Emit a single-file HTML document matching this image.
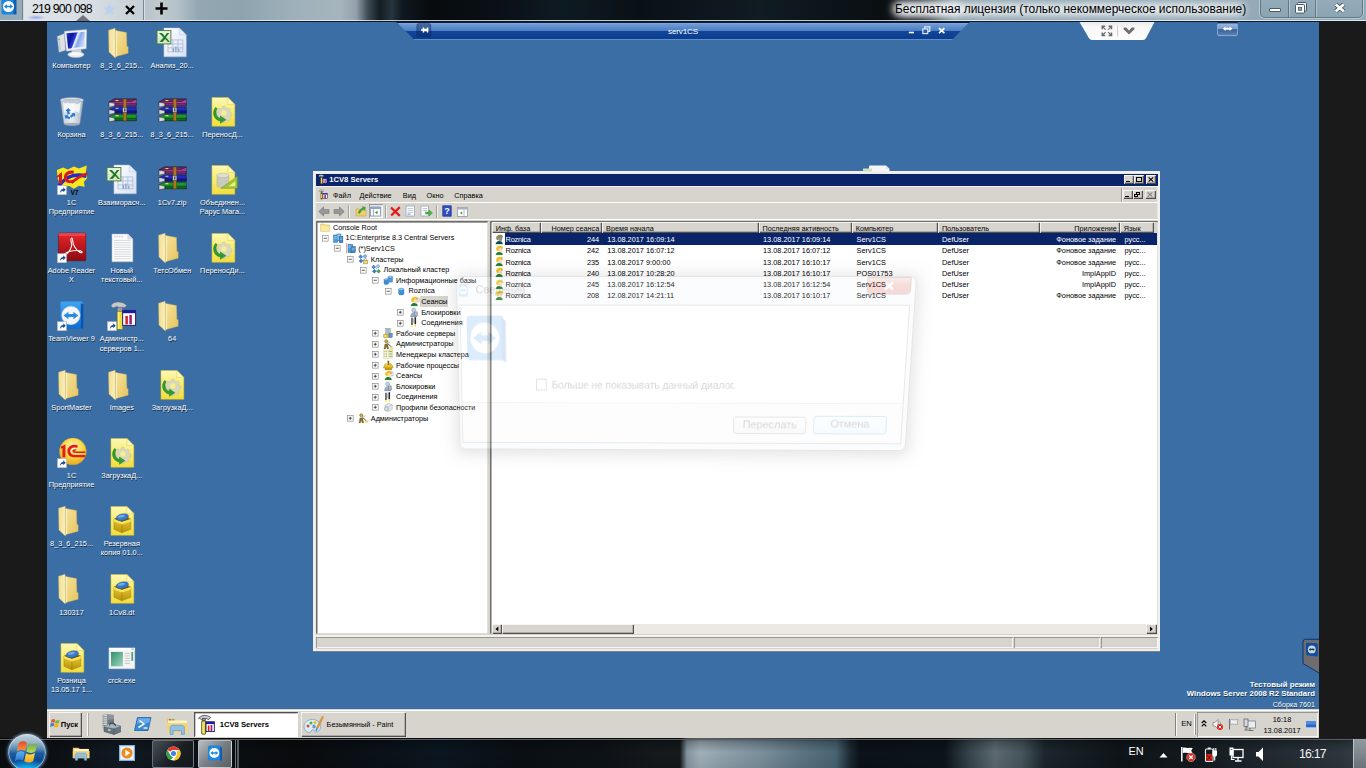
<!DOCTYPE html>
<html><head><meta charset="utf-8"><title>TeamViewer</title>
<style>
*{margin:0;padding:0;box-sizing:border-box}
html,body{width:1366px;height:768px;overflow:hidden;background:#1a1a1a;font-family:"Liberation Sans",sans-serif;}
.a{position:absolute}
.t{position:absolute;white-space:nowrap;font-size:7.6px;line-height:10px;color:#000}
svg{position:absolute;overflow:visible}
#remote{position:absolute;left:47px;top:22px;width:1272px;height:717px;background:#3a6ea5;overflow:hidden}
/* everything inside #remote uses page coords shifted by (-47,-22) via this wrapper */
#rc{position:absolute;left:-47px;top:-22px;width:1366px;height:768px}
.lbl{position:absolute;width:60px;text-align:center;color:#fff;font-size:7.4px;line-height:9.15px;white-space:nowrap;text-shadow:0.6px 0.7px 0.6px rgba(0,0,0,.7)}
</style></head><body>
<!-- ===== TeamViewer client top bar (Aero glass) ===== -->
<div class="a" id="top" style="left:0;top:0;width:1366px;height:22px;background:linear-gradient(90deg,#93a8b3 0px,#98abb6 22px,#b9c4ca 146px,#c0cacf 160px,#b5c1c8 178px,#93a7b2 198px,#8ea3ae 240px,#9db0ba 290px,#a6b5bd 340px,#93a2aa 356px,#3d4a52 368px,#141c22 380px,#27353e 392px,#101820 402px,#070b0e 430px,#0a1016 500px,#0e1a22 560px,#0a1116 640px,#101b22 760px,#0a0f12 880px,#10181c 918px,#2c383e 930px,#64747c 942px,#8499a4 954px,#8fa5b1 975px,#92a8b4 1100px,#94aab6 1256px,#94aab7 1366px)"></div>
<div class="a" style="left:0;top:19.500px;width:1366px;height:1.900px;background:linear-gradient(180deg,rgba(255,255,255,.6),rgba(240,245,248,.95))"></div>
<div class="a" style="left:0;top:21.300px;width:1366px;height:1.200px;background:#0a1a30;z-index:5"></div>
<!-- TV logo top-left -->
<svg class="a" style="left:-0.500px;top:-2.500px" width="18" height="18" viewBox="0 0 18 18"><rect x="1.5" y="0.5" width="14" height="16" rx="2.5" fill="#1c86e0"/><rect x="13.5" y="1.5" width="3" height="15" rx="1" fill="#0d5fb5"/><circle cx="8.5" cy="8.5" r="5.6" fill="#fff"/><path d="M4 8.5l3-2.3v1.5h3v-1.5l3 2.3-3 2.3v-1.5h-3v1.5z" fill="#1c86e0"/></svg>
<!-- tab separators -->
<div class="a" style="left:22px;top:0;width:1px;height:20px;background:rgba(80,95,105,.55)"></div>
<div class="a" style="left:23px;top:0;width:1px;height:20px;background:rgba(255,255,255,.55)"></div>
<div class="a" style="left:143px;top:0;width:1px;height:20px;background:rgba(80,95,105,.6)"></div>
<div class="a" style="left:144px;top:0;width:1px;height:20px;background:rgba(255,255,255,.45)"></div>
<div class="a" style="left:24px;top:0;width:119px;height:20px;background:linear-gradient(90deg,rgba(226,231,235,.95),rgba(218,224,229,.92) 60%,rgba(200,210,216,.8))"></div>
<div class="t" style="left:32px;top:0.800px;font-size:12.3px;line-height:17px;color:#000;letter-spacing:-0.78px">219 900 098</div>
<!-- tiny blue-ish glow under tab text -->
<div class="a" style="left:26px;top:15px;width:20px;height:5px;background:radial-gradient(ellipse at center,rgba(140,150,240,.8),rgba(140,150,240,0) 70%)"></div>
<!-- tab pointer triangle -->
<svg class="a" style="left:76px;top:15px" width="14" height="6" viewBox="0 0 14 6"><path d="M0 6L7 0L14 6Z" fill="#6f7478"/></svg>
<!-- faint star -->
<svg class="a" style="left:102px;top:2px" width="15" height="15" viewBox="0 0 15 15"><path d="M7.5 1l1.9 4.2 4.4.5-3.3 3 .9 4.4-3.9-2.3-3.9 2.3.9-4.4-3.3-3 4.4-.5z" fill="#b9d2ee" opacity=".9"/></svg>
<!-- tab close X -->
<svg class="a" style="left:125px;top:5px" width="10" height="10" viewBox="0 0 10 10"><path d="M1 1L9 9M9 1L1 9" stroke="#000" stroke-width="2.3"/></svg>
<!-- plus -->
<svg class="a" style="left:155px;top:2px" width="13" height="13" viewBox="0 0 13 13"><path d="M6.5 0.5V12.5M0.5 6.5H12.5" stroke="#000" stroke-width="2.6"/></svg>
<!-- title -->
<div class="a" style="left:893px;top:3px;width:70px;height:12px;background:rgba(235,240,243,.92);filter:blur(4.500px);border-radius:6px"></div>
<div class="a" style="left:899px;top:3.500px;width:343px;height:11px;background:rgba(244,247,249,.82);filter:blur(4.500px);border-radius:6px"></div>
<div class="t" style="left:895px;top:2.200px;font-size:11.95px;line-height:15px;color:#000;text-shadow:0 0 6px rgba(255,255,255,.9),0 0 10px rgba(255,255,255,.7)">Бесплатная лицензия (только некоммерческое использование)</div>
<!-- window buttons -->
<div class="a" style="left:1260px;top:-4px;width:103px;height:21.5px;border:1px solid rgba(60,80,95,.55);border-radius:0 0 5px 5px;background:linear-gradient(180deg,#96adba,#8ca5b3);box-shadow:0 0 0 1px rgba(255,255,255,.35)"></div>
<div class="a" style="left:1288px;top:0;width:1px;height:17px;background:rgba(60,80,95,.55)"></div>
<div class="a" style="left:1289px;top:0;width:1px;height:17px;background:rgba(255,255,255,.3)"></div>
<div class="a" style="left:1315px;top:0;width:1px;height:17px;background:rgba(60,80,95,.55)"></div>
<div class="a" style="left:1316px;top:0;width:1px;height:17px;background:rgba(255,255,255,.3)"></div>
<div class="a" style="left:1269px;top:8px;width:12px;height:4.4px;background:#fff;border:1px solid #4a5a66;border-radius:1px"></div>
<svg class="a" style="left:1294px;top:1px" width="14" height="14" viewBox="0 0 14 14"><rect x="3.5" y="1.5" width="9" height="8.6" rx="1" fill="#e8eef2" stroke="#4a5a66" stroke-width="1"/><rect x="1.5" y="3.5" width="9" height="8.6" rx="1" fill="#fff" stroke="#4a5a66" stroke-width="1"/><rect x="4.3" y="6.3" width="3.4" height="3" fill="#8ea4b1" stroke="#4a5a66" stroke-width=".8"/></svg>
<svg class="a" style="left:1334px;top:3px" width="11.500" height="9.600" viewBox="0 0 11.500 9.600"><path d="M1.800 1.400L9.700 8.200M9.700 1.400L1.800 8.200" stroke="#46555f" stroke-width="4.400"/><path d="M1.800 1.400L9.700 8.200M9.700 1.400L1.800 8.200" stroke="#fff" stroke-width="2.700"/></svg>
<!-- ===== Remote desktop (1920x1080 scaled to 1272x717) ===== -->
<div id="remote"><div id="rc">
<svg width="0" height="0" style="position:absolute"><defs>
<symbol id="i-adminraw" viewBox="0 0 32 32"><path d="M5 6C6 1.500 16 0 21 5.500L19 7.500H13L11 6.500L7 8Z" fill="#c4c8cc" stroke="#5c6064" stroke-width=".8"/><rect x="11.500" y="7.500" width="5" height="4" fill="#9a9ea2" stroke="#5c6064" stroke-width=".6"/><rect x="11.200" y="11.500" width="5.600" height="18" fill="#f0dc3a" stroke="#4c4408" stroke-width="1"/><rect x="16.800" y="12.500" width="13" height="15" fill="#fff" stroke="#14146c" stroke-width="1.600"/><rect x="16.800" y="12.500" width="13" height="3.500" fill="#1c1c9c"/><rect x="19.500" y="18" width="2.800" height="8.500" fill="#cc2222"/><rect x="23.500" y="17" width="2.800" height="9.500" fill="#a3197a"/></symbol>
<symbol id="tfolder" viewBox="0 0 16 16"><path d="M1 3H6L7.500 4.500H14.500V14H1Z" fill="#f6e08a" stroke="#c8a83c" stroke-width=".7"/><path d="M1.500 6H14V13.500H1.500Z" fill="#faeaa4"/></symbol>
<symbol id="tsrv" viewBox="0 0 16 16"><rect x="1" y="3" width="6" height="11" fill="#4c9cd8" stroke="#1c5c9c" stroke-width=".7"/><rect x="6" y="1.500" width="6" height="10" fill="#6cc4ec" stroke="#1c5c9c" stroke-width=".7"/><rect x="9.500" y="5" width="5.500" height="9.500" fill="#3c84c8" stroke="#1c4c8c" stroke-width=".7"/><path d="M2 5.500H6M2 8H6M7 4H11M10.500 7.500H14M10.500 10H14" stroke="#d4ecfc" stroke-width=".8"/></symbol>
<symbol id="tsrv2" viewBox="0 0 16 16"><path d="M.6 0V16" stroke="#c83c3c" stroke-width=".8"/><rect x="3" y="2" width="7" height="12.500" fill="#4c9cd8" stroke="#1c5c9c" stroke-width=".7"/><rect x="7.500" y="5.500" width="6.500" height="9" fill="#3c84c8" stroke="#1c4c8c" stroke-width=".7"/><path d="M4 4.500H9M4 7H7M8.500 8H13M8.500 10.500H13" stroke="#d4ecfc" stroke-width=".8"/></symbol>
<symbol id="tclus" viewBox="0 0 16 16"><path d="M4 1L7 4L4 7L1 4Z" fill="#4c8cd8" stroke="#1c4c9c" stroke-width=".5"/><path d="M10.500 0.500L13.500 3.500L10.500 6.500L7.500 3.500Z" fill="#8cb4e8" stroke="#1c4c9c" stroke-width=".5"/><path d="M4.500 7.500L7.500 10.500L4.500 13.500L1.500 10.500Z" fill="#3c7cc8" stroke="#1c4c9c" stroke-width=".5"/><path d="M7 5L8.500 6.500M7 9.500L8.500 8" stroke="#1c4c9c" stroke-width=".6"/><rect x="8.500" y="9.500" width="6" height="5.500" fill="#e8dc7c" stroke="#6c6420" stroke-width=".6"/><path d="M9.800 9.500V8C9.800 6 13.200 6 13.200 8V9.500" stroke="#8c8c8c" stroke-width=".9" fill="none"/></symbol>
<symbol id="tclus2" viewBox="0 0 16 16"><path d="M4 1.500L7 4.500L4 7.500L1 4.500Z" fill="#4c8cd8" stroke="#1c4c9c" stroke-width=".5"/><path d="M10.500 0.500L13.500 3.500L10.500 6.500L7.500 3.500Z" fill="#a8c4ec" stroke="#1c4c9c" stroke-width=".5"/><path d="M5 8L8 11L5 14L2 11Z" fill="#3c7cc8" stroke="#1c4c9c" stroke-width=".5"/><path d="M11.500 8L14.500 11L11.500 14L8.500 11Z" fill="#3cac3c" stroke="#1c6c1c" stroke-width=".5"/><path d="M7 5.500L9 7.500M7.500 10.500H9" stroke="#1c4c9c" stroke-width=".6"/></symbol>
<symbol id="tdbs" viewBox="0 0 16 16"><path d="M1.500 7V13Q1.500 14.500 5 14.500Q8.500 14.500 8.500 13V7Z" fill="#3c8cd4" stroke="#1c5c9c" stroke-width=".5"/><ellipse cx="5" cy="7" rx="3.500" ry="1.500" fill="#7cc0ec" stroke="#1c5c9c" stroke-width=".5"/><path d="M7.500 3V9.500Q7.500 11 11 11Q14.500 11 14.500 9.500V3Z" fill="#4c9cdc" stroke="#1c5c9c" stroke-width=".5"/><ellipse cx="11" cy="3" rx="3.500" ry="1.500" fill="#9cd4f4" stroke="#1c5c9c" stroke-width=".5"/></symbol>
<symbol id="tdb" viewBox="0 0 16 16"><path d="M4 5V12Q4 13.500 8 13.500Q12 13.500 12 12V5Z" fill="#3c94d8" stroke="#1c64a4" stroke-width=".5"/><ellipse cx="8" cy="5" rx="4" ry="1.800" fill="#8cd0f4" stroke="#1c64a4" stroke-width=".5"/></symbol>
<symbol id="tuser" viewBox="0 0 16 16"><rect x="10" y="3" width="5.500" height="6" fill="#dfe6f0" stroke="#7c8ca4" stroke-width=".6"/><path d="M2.500 15.200C3 12.200 5 10.900 7 10.500L10.500 10.800C12 11.500 13 13 13.300 15.200Z" fill="#1c7c30"/><path d="M2.500 15.500H13.300" stroke="#9ce09c" stroke-width=".7"/><path d="M7 4.500H12C12.900 6.500 12.500 9 11.500 10.500C10 11.100 8 10.800 7 9.500Z" fill="#f8dcbc"/><path d="M3.500 7.500C2.500 2 8 0.300 11 1.300C13.200 1.900 13.700 3.600 13 4.800L8.700 4.600C7.700 5.500 7.200 7.500 6.700 9.300L4.500 9Z" fill="#f0c428"/><path d="M11 4.700L13.200 4.800" stroke="#b8641c" stroke-width=".9"/></symbol>
<symbol id="tuser2" viewBox="0 0 16 16"><path d="M2.500 15.200C3 12.200 5 10.900 7 10.500L10.500 10.800C12 11.500 13 13 13.300 15.200Z" fill="#1c7c30"/><path d="M2.500 15.500H13.300" stroke="#9ce09c" stroke-width=".7"/><path d="M7 4.500H12C12.900 6.500 12.500 9 11.500 10.500C10 11.100 8 10.800 7 9.500Z" fill="#f8dcbc"/><path d="M3.500 7.500C2.500 2 8 0.300 11 1.300C13.200 1.900 13.700 3.600 13 4.800L8.700 4.600C7.700 5.500 7.200 7.500 6.700 9.300L4.500 9Z" fill="#f0c428"/><path d="M11 4.700L13.200 4.800" stroke="#b8641c" stroke-width=".9"/></symbol>
<symbol id="tuserd" viewBox="0 0 16 16"><path d="M2.500 15.200C3 12.200 5 10.900 7 10.500L10.500 10.800C12 11.500 13 13 13.300 15.200Z" fill="#0c4c44"/><path d="M2.500 15.500H13.300" stroke="#2c6c5c" stroke-width=".7"/><path d="M7 4.500H12C12.900 6.500 12.500 9 11.500 10.500C10 11.100 8 10.800 7 9.500Z" fill="#9090a8"/><path d="M3.500 7.500C2.500 2 8 0.300 11 1.300C13.200 1.900 13.700 3.600 13 4.800L8.700 4.600C7.700 5.500 7.200 7.500 6.700 9.300L4.500 9Z" fill="#8c8c54"/><path d="M11 4.700L13.200 4.800" stroke="#b8641c" stroke-width=".9"/></symbol>
<symbol id="tlock" viewBox="0 0 16 16"><circle cx="7" cy="4.500" r="3" fill="#c4d0e4" stroke="#6c7c9c" stroke-width=".6"/><path d="M2.500 15C2.500 10.500 4.500 8.500 7 8.500C9.500 8.500 11.500 10.500 11.500 15Z" fill="#9cacd0" stroke="#5c6c94" stroke-width=".6"/><rect x="8" y="8.500" width="5" height="5" fill="#b4bcc8" stroke="#5c646c" stroke-width=".5"/><path d="M9 8.500V7C9 5.500 12 5.500 12 7V8.500" stroke="#7c848c" stroke-width=".8" fill="none"/></symbol>
<symbol id="tconn" viewBox="0 0 16 16"><path d="M4.500 1V12" stroke="#1c1c1c" stroke-width="1.800"/><path d="M9.500 0.500V11" stroke="#2c2c2c" stroke-width="2.400"/><path d="M4.500 12V15.500M9.500 11V15" stroke="#f0d01c" stroke-width="1.300"/><path d="M7 2V9" stroke="#8c8c8c" stroke-width=".8"/></symbol>
<symbol id="twsrv" viewBox="0 0 16 16"><rect x="4" y="0.500" width="7" height="10" fill="#c4ccd8" stroke="#6c7c94" stroke-width=".6"/><path d="M5 2.500H10M5 4.500H10M5 6.500H10" stroke="#7c8ca4" stroke-width=".7"/><path d="M11 2V14" stroke="#e8c43c" stroke-width=".8"/><path d="M1 9.500H9V14.500H1Z" fill="#e8c43c" stroke="#94740c" stroke-width=".6"/><circle cx="3.500" cy="12" r="1.500" fill="#f8e47c"/><rect x="9" y="8" width="5" height="6.500" fill="#5c94d4" stroke="#1c4c8c" stroke-width=".5"/></symbol>
<symbol id="tadm" viewBox="0 0 16 16"><circle cx="5" cy="3.500" r="2.500" fill="#c8a44c" stroke="#6c5414" stroke-width=".6"/><path d="M1.500 15L3 7.500H7L8.500 15H6.500L5 10.500L3.500 15Z" fill="#8c7424" stroke="#4c3c0c" stroke-width=".5"/><path d="M7 6.500L13 12.500" stroke="#4c4414" stroke-width="1.400"/><circle cx="13" cy="13" r="1.800" fill="none" stroke="#e8c43c" stroke-width="1"/><path d="M8.500 6L10.500 4" stroke="#3c8c3c" stroke-width="1"/></symbol>
<symbol id="tmgr" viewBox="0 0 16 16"><rect x="1" y="1.500" width="14" height="13" fill="#f8f4d4" stroke="#c8c08c" stroke-width=".5"/><path d="M2 4H7M2 7.500H7M2 11H7" stroke="#8c8c6c" stroke-width="1.200" stroke-dasharray="1.500 1"/><path d="M8.500 4H14M8.500 7.500H14M8.500 11H14" stroke="#6cac4c" stroke-width="1.300"/><path d="M9 2.500L14.500 1" stroke="#e8c43c" stroke-width="1"/></symbol>
<symbol id="tproc" viewBox="0 0 16 16"><path d="M1.500 10C1.500 3 14.500 3 14.500 10L15.500 12H.5Z" fill="#ecc02c" stroke="#94740c" stroke-width=".6"/><rect x="7" y="1" width="2.200" height="6" fill="#6c5c1c"/><path d="M3 12.500H13V15H3Z" fill="#c49c1c" stroke="#7c5c0c" stroke-width=".5"/><path d="M4 8C5 5.500 7 5 8 5" stroke="#fcf0a4" stroke-width="1" fill="none"/></symbol>
<symbol id="tsec" viewBox="0 0 16 16"><path d="M3 5L9 2L14 4.500V11L8 14.500L3 12Z" fill="#e4e8ec" stroke="#8c949c" stroke-width=".6"/><path d="M3 5L8 7.500L14 4.500M8 7.500V14.500" stroke="#a4acb4" stroke-width=".6" fill="none"/><circle cx="5" cy="10.500" r="3" fill="#d4dce4" stroke="#7c848c" stroke-width=".6"/></symbol>
</defs></svg>
<!-- ===== Desktop icons ===== -->

<svg width="0" height="0" style="position:absolute"><defs>
<linearGradient id="gFoldL" x1="0" y1="0" x2="1" y2="0"><stop offset="0" stop-color="#f3dd8e"/><stop offset="1" stop-color="#fbf0c0"/></linearGradient>
<linearGradient id="gFoldR" x1="0" y1="0" x2="1" y2="1"><stop offset="0" stop-color="#f6e39a"/><stop offset="1" stop-color="#e6c460"/></linearGradient>
<linearGradient id="gYel" x1="0" y1="0" x2="0" y2="1"><stop offset="0" stop-color="#fcf8b8"/><stop offset=".5" stop-color="#f8ec6c"/><stop offset="1" stop-color="#f2dc40"/></linearGradient>
<linearGradient id="gPage" x1="0" y1="0" x2="1" y2="1"><stop offset="0" stop-color="#ffffff"/><stop offset="1" stop-color="#d7e2f4"/></linearGradient>
<linearGradient id="gScr" x1="0" y1="0.1" x2="1" y2="0.45"><stop offset="0" stop-color="#2238d0"/><stop offset=".3" stop-color="#0a14a0"/><stop offset=".5" stop-color="#2a40c8"/><stop offset=".56" stop-color="#eef4ff"/><stop offset=".72" stop-color="#86a8ec"/><stop offset="1" stop-color="#c4d8f8"/></linearGradient>
<linearGradient id="gBin" x1="0" y1="0" x2="1" y2="0"><stop offset="0" stop-color="#c9d3dc"/><stop offset=".5" stop-color="#f4f7fa"/><stop offset="1" stop-color="#aeb9c4"/></linearGradient>
<radialGradient id="g1c" cx=".5" cy=".35" r=".65"><stop offset="0" stop-color="#fff7c0"/><stop offset=".55" stop-color="#f9d848"/><stop offset="1" stop-color="#e8a820"/></radialGradient>
<linearGradient id="gRed" x1="0" y1="0" x2="0" y2="1"><stop offset="0" stop-color="#e8262a"/><stop offset="1" stop-color="#8c0a10"/></linearGradient>
<linearGradient id="gTV" x1="0" y1="0" x2="0" y2="1"><stop offset="0" stop-color="#3fa4f4"/><stop offset="1" stop-color="#0c6cd4"/></linearGradient>
<linearGradient id="gBox" x1="0" y1="0" x2="0" y2="1"><stop offset="0" stop-color="#f2d23a"/><stop offset="1" stop-color="#b8920c"/></linearGradient>
<linearGradient id="gCrck" x1="0" y1="0" x2="1" y2="1"><stop offset="0" stop-color="#2f8f6a"/><stop offset="1" stop-color="#9fd6c0"/></linearGradient>

<symbol id="i-folder" viewBox="0 0 32 32"><path d="M2.600 3.300L9.200 1.200L9.800 30.800L8.800 30.600L3 25.200Z" fill="url(#gFoldL)" stroke="#d9bc62" stroke-width=".4"/><path d="M9.600 3.400L20.600 5.600L21 19.500L22.300 19.800L22.300 26.300L9.900 29.800Z" fill="url(#gFoldR)" stroke="#d4b455" stroke-width=".4"/><path d="M9.600 3.400L11 4L11.200 29.400L9.900 29.800Z" fill="#fbf1c4" opacity=".9"/></symbol>

<symbol id="i-computer" viewBox="0 0 32 32"><path d="M1.200 9.500L8.500 6.500L9.500 23.500L3 25.500Z" fill="#dfe3e8" stroke="#a4abb3" stroke-width=".4"/><path d="M2.300 11L4 10.400L5 23.500L3.400 24.200Z" fill="#c4cdd6"/><circle cx="3" cy="12.500" r=".7" fill="#6ab04c"/><path d="M8.300 4.300L31 2.400L30.500 21.800L10.500 24.400Z" fill="#f0f2f5" stroke="#a4acb4" stroke-width=".5"/><path d="M10.500 6.200L28.900 4.700L28.500 19.700L12.200 21.800Z" fill="url(#gScr)"/><path d="M15.500 23.600L25 22.500L26 26.500L16.500 27.500Z" fill="#d4d8de"/><ellipse cx="20" cy="27.800" rx="8.300" ry="2.900" fill="#eceef2" stroke="#aab1b8" stroke-width=".4"/><ellipse cx="20" cy="27" rx="5.500" ry="1.500" fill="#f8f9fb"/></symbol>

<symbol id="i-excel" viewBox="0 0 32 32"><path d="M8 1H23.500L30.500 8V30H8Z" fill="url(#gPage)" stroke="#aebcd6" stroke-width=".5"/><path d="M23.500 1V8H30.500Z" fill="#e4ecf8" stroke="#aebcd6" stroke-width=".4"/><path d="M12 13H27M12 17H27M12 21H27M12 25H27M12 13V25M17 13V25M22 13V25M27 13V25" stroke="#9fb2d4" stroke-width=".7" fill="none"/><path d="M17.500 25V21.500M20 25V19.500M23 25V22" stroke="#7f97c4" stroke-width="1.200"/><rect x="1" y="3.500" width="14" height="13.500" fill="#d8eac8" stroke="#4a7a3a" stroke-width=".9"/><rect x="2" y="4.500" width="12" height="5" fill="#eef6e4" opacity=".8"/><path d="M3 6L7.500 10.500L3.500 15H6.500L9.300 12L12 15H14L10 10.300L13.500 6H11L8.800 9L6 6Z" fill="#1f7a2a"/></symbol>

<symbol id="i-bin" viewBox="0 0 32 32"><path d="M4.500 3.800L27.500 3.800L24 28Q16 31.500 8 28Z" fill="url(#gBin)" stroke="#8f9aa6" stroke-width=".5" opacity=".93"/><path d="M7 6Q10 9 12 6.500Q15 10 18 7Q21 10 25 6L23.500 17Q19 14 16 17Q12 14 8.500 17Z" fill="#fff" opacity=".75"/><ellipse cx="16" cy="4" rx="11.500" ry="2.400" fill="#e4eaf0" stroke="#8f9aa6" stroke-width=".5"/><ellipse cx="16" cy="4.200" rx="9.500" ry="1.500" fill="#b9c4ce"/><path d="M9.500 14.500l3-2.500 2.500 3-1.600.2.500 3-2.200.4-.6-3.100zM15.500 17l3.800.3-.3 3.800-1.100-1.200-2.500 2-1.400-1.700 2.500-2zM10 23.500l-1.500-3.500 3.600-1.300-.5 1.500 2.800 1.300-.9 2-2.800-1.300z" fill="#2f78d4"/><ellipse cx="16" cy="28.500" rx="8" ry="1.600" fill="#9aa5b0" opacity=".85"/></symbol>

<symbol id="i-rar" viewBox="0 0 32 32"><g stroke="#181818" stroke-width=".45"><path d="M3 21L8.500 18.500H30.500V24.800H9Z" fill="#189a28"/><path d="M3 21V26L9 24.800V22.300Z" fill="#d8d8d8"/><path d="M9 22.300H30.500V24.800H9Z" fill="#0c6c18"/><path d="M3 13.500L8.500 11H30.500V17.300H9Z" fill="#2028c8"/><path d="M3 13.500V18.500L9 17.300V14.800Z" fill="#d8d8d8"/><path d="M9 14.800H30.500V17.300H9Z" fill="#101890"/><path d="M3 6L8.500 3H30.500V10H9Z" fill="#b040a0"/><path d="M3 6V11.200L9 10V7.500Z" fill="#d8d8d8"/><path d="M9 7.500H30.500V10H9Z" fill="#7c2874"/><path d="M3 6L8.500 3H30.500L26 5.500Z" fill="#6c2468"/></g><path d="M9.500 4.500L12.500 4.500M9.500 12.300L12.500 12.300M9.500 19.800L12.500 19.800" stroke="#e8d84a" stroke-width="1.200"/><rect x="17.300" y="3" width="3.200" height="22" fill="#b07420" stroke="#5c3808" stroke-width=".4"/><rect x="16.800" y="11.500" width="4.200" height="5" fill="#c8c8c8" stroke="#333" stroke-width=".5"/><rect x="18.300" y="12.500" width="1.200" height="3" fill="#333"/></symbol>

<symbol id="i-ydoc" viewBox="0 0 32 32"><path d="M5 1.500H21L28 8.500V30.500H5Z" fill="url(#gYel)" stroke="#d8c020" stroke-width=".5"/><path d="M21 1.500V8.500H28Z" fill="#fdf8c0" stroke="#d8c020" stroke-width=".4"/></symbol>

<symbol id="i-ygear" viewBox="0 0 32 32"><use href="#i-ydoc"/><g transform="translate(17,17)"><path d="M-1.500-8h3l.6 2.200 1.900.8 2-1.100 2.100 2.100-1.100 2 .8 1.900 2.200.6v3l-2.200.6-.8 1.900 1.100 2-2.100 2.100-2-1.100-1.900.8-.6 2.200h-3l-.6-2.200-1.900-.8-2 1.100-2.100-2.100 1.100-2-.8-1.900-2.200-.6v-3l2.200-.6.800-1.900-1.100-2 2.100-2.100 2 1.100 1.900-.8z" transform="scale(.82)" fill="#d6d6c6" stroke="#b4b4a0" stroke-width=".5" opacity=".92"/><circle r="2.600" fill="#f9f08c"/></g><path d="M8.500 11.500C4.500 17 7 24 13.500 25.200L13.500 27.500L19 23.800L13.500 20.200L13.500 22.500C9.500 21.500 8 16.500 10.200 12.500Z" fill="#2f9e2c" stroke="#1c7018" stroke-width=".4"/></symbol>

<symbol id="i-ydb" viewBox="0 0 32 32"><use href="#i-ydoc"/><path d="M10 11.500V21.500Q10 24 16 24Q22 24 22 21.500V11.500Z" fill="#c9c9bc" stroke="#a6a694" stroke-width=".4"/><ellipse cx="16" cy="11.500" rx="6" ry="2.300" fill="#deded2" stroke="#a6a694" stroke-width=".4"/><path d="M14 24.500L30.500 24.500L30.500 12.500Z" fill="#9cc43c" stroke="#6e9a1c" stroke-width=".5"/><path d="M21.500 22.500L28.500 22.500L28.500 17.300Z" fill="#f7ec78"/></symbol>

<symbol id="i-ybox" viewBox="0 0 32 32"><use href="#i-ydoc"/><path d="M8 14L16 11L25 14L25 24.500L16 28L8 24.500Z" fill="url(#gBox)" stroke="#94740a" stroke-width=".4"/><path d="M8 14L16 17L25 14L16 11Z" fill="#7a5c08"/><path d="M16 17V28" stroke="#94740a" stroke-width=".5"/><path d="M8 14L16 17L16 19.500L8 16.500ZM25 14L16 17L16 19.500L25 16.500Z" fill="#f9e458"/><ellipse cx="16.500" cy="12.300" rx="6.300" ry="3.300" fill="#3a78c8" stroke="#1c4c94" stroke-width=".4" transform="rotate(-12 16.500 12.300)"/><ellipse cx="15.500" cy="11.300" rx="3.500" ry="1.300" fill="#8fc0f0" opacity=".7" transform="rotate(-12 15.500 11.300)"/></symbol>

<symbol id="i-txt" viewBox="0 0 32 32"><path d="M6 2H22L27 7V30H6Z" fill="#fcfcfc" stroke="#b4b8bc" stroke-width=".5"/><path d="M22 2V7H27Z" fill="#dfe3e6" stroke="#b4b8bc" stroke-width=".4"/><path d="M8 8.500H25M8 10.800H25M8 13.100H25M8 15.400H25M8 17.700H25M8 20H25M8 22.300H25M8 24.600H25M8 26.900H25" stroke="#c9cdd2" stroke-width=".7"/><path d="M8 4.500h1.500M10.500 4.500h1.500M13 4.500h1.500M15.500 4.500h1.500" stroke="#c9cdd2" stroke-width="1.400"/></symbol>

<symbol id="i-short" viewBox="0 0 10 10"><rect x=".3" y=".3" width="9.400" height="9.400" fill="#fff" stroke="#9aa4ae" stroke-width=".6"/><path d="M3 8C3 5 4.500 3.800 6.300 3.800L6.300 2.200L8.800 4.700L6.300 7.200L6.300 5.600C5 5.600 4 6.300 3 8Z" fill="#1c4c9c"/></symbol>

<symbol id="i-1c7" viewBox="0 0 32 32"><path d="M1 6L7 3.500L12 5.500L18 2.500L23 4.500L31 1.500L30 9L31.500 14L28 18L29 23L23 22L18 25L13 22L8 24L4 20L1.500 14Z" fill="#f7e81c"/><path d="M1.500 21C9 12 16 7.500 30.500 10L30.500 14C17 11.500 11 14.500 4.500 23Z" fill="#2a2ac8"/><path d="M1 12L6 8V20H3V12.500L1 14Z" fill="#d81c1c"/><path d="M18 7C12.500 5.500 8 9 8 13.500C8 18 12.500 20.500 18 18.500L17.200 16C14 17 11 16 11 13.500C11 10.500 14 9 17.500 10Z" fill="#d81c1c"/><path d="M14 18C20.500 13 25.500 10.500 31.500 8L31.500 11C25.500 13 21.500 15.500 16.500 20Z" fill="#d81c1c"/><text x="14.500" y="31" font-family="Liberation Sans" font-weight="700" font-size="6.500" fill="#000">V7</text><use href="#i-short" x="1" y="21.300" width="10" height="10"/></symbol>

<symbol id="i-adobe" viewBox="0 0 32 32"><rect x="2.500" y="1" width="27.500" height="28" rx="1" fill="url(#gRed)" stroke="#6c080c" stroke-width=".5"/><path d="M2.500 1h27v3h-27z" fill="#f4585c" opacity=".6"/><path d="M16 6C14.500 6 15 10 16 13C15 17 12 21.500 9.500 23C7 24.500 7 22.500 10 21C13.500 19 20.500 18 24.500 19C27.500 20 26.500 21.500 24 20.500C20.500 19 17 13 16.800 9C16.700 7 16.700 6 16 6Z" fill="none" stroke="#fff" stroke-width="1.100"/><use href="#i-short" x="1" y="21.300" width="10" height="10"/></symbol>

<symbol id="i-tv" viewBox="0 0 32 32"><path d="M6 1.500L25 1.500Q27 1.500 27 3.500L27 27.500Q27 29 25 29L6 29Q4.500 29 4.500 27.500L4.500 3.500Q4.500 1.500 6 1.500Z" fill="url(#gTV)"/><path d="M25 3L27.500 4.500V29.500L25 28Z" fill="#0a54b0"/><circle cx="15" cy="15.500" r="9.300" fill="#f4f6f8"/><circle cx="15" cy="15.500" r="9.300" fill="none" stroke="#c4ccd4" stroke-width=".5"/><path d="M7.500 15.500L12.500 11.700V14H17.500V11.700L22.500 15.500L17.500 19.300V17H12.500V19.300Z" fill="#2a8ee8"/><use href="#i-short" x="1" y="21.300" width="10" height="10"/></symbol>

<symbol id="i-admin" viewBox="0 0 32 32"><path d="M5 6C6 1.500 16 0 21 5.500L19 7.500H13L11 6.500L7 8Z" fill="#c4c8cc" stroke="#5c6064" stroke-width=".5"/><rect x="11.500" y="7.500" width="5" height="4" fill="#9a9ea2" stroke="#5c6064" stroke-width=".4"/><rect x="11.200" y="11.500" width="5.600" height="18" fill="#f0dc3a" stroke="#7c7018" stroke-width=".5"/><path d="M12.800 12V29" stroke="#fdf6a0" stroke-width="1"/><rect x="16.800" y="10.500" width="13" height="15" fill="#fff" stroke="#14146c" stroke-width=".9"/><rect x="16.800" y="10.500" width="13" height="2.800" fill="#1c1c9c"/><rect x="19.500" y="16" width="2.500" height="8.500" fill="#cc2222"/><rect x="23.500" y="15" width="2.500" height="9.500" fill="#a3197a"/><use href="#i-short" x="1" y="21.300" width="10" height="10"/></symbol>

<symbol id="i-1c8" viewBox="0 0 32 32"><circle cx="17" cy="14.500" r="13.500" fill="url(#g1c)" stroke="#e0a41c" stroke-width=".4"/><path d="M5 9.500L9.500 7.500V20.500H6.500V11L5 11.700Z" fill="#e01c1c"/><path d="M22 8.500C16.500 6.500 11.500 9.500 11.500 14C11.500 18.500 15 20.500 19 20.500H29.500V18H19.500C16.500 18 14.300 16.800 14.300 14C14.300 11 17.500 9.800 21.300 11Z" fill="#e01c1c"/><path d="M20.500 12.500C18 12 16.500 13 16.500 14.300C16.500 15.500 17.500 16 19.500 16H29.500V14.500H20C19 14.500 18.600 14.400 18.600 14.100C18.600 13.700 19.500 13.600 20.300 13.800Z" fill="#e01c1c"/><use href="#i-short" x="1" y="21.300" width="10" height="10"/></symbol>

<symbol id="i-crck" viewBox="0 0 32 32"><rect x="3" y="6" width="26" height="21" fill="#f4f4f4" stroke="#c8ccd0" stroke-width=".6"/><rect x="3" y="6" width="26" height="2.200" fill="#fff"/><rect x="25.500" y="6.600" width="2.500" height="1" fill="#9aa"/><rect x="5" y="10" width="12" height="14.500" fill="url(#gCrck)"/><path d="M19 11.500H24M19 14H24M19 16.500H24M19 19H24M19 21.500H24" stroke="#c4c8cc" stroke-width="1"/><rect x="25.500" y="10" width="1.800" height="9" fill="#4aa47c"/></symbol>
</defs></svg>

<svg class="a" style="left:55.6px;top:27.2px" width="31.8" height="31.8"><use href="#i-computer"/></svg>
<div class="lbl" style="left:41.5px;top:61.4px">Компьютер</div>
<svg class="a" style="left:105.9px;top:27.2px" width="31.8" height="31.8"><use href="#i-folder"/></svg>
<div class="lbl" style="left:91.8px;top:61.4px">8_3_6_215...</div>
<svg class="a" style="left:156.3px;top:27.2px" width="31.8" height="31.8"><use href="#i-excel"/></svg>
<div class="lbl" style="left:142.2px;top:61.4px">Анализ_20...</div>
<svg class="a" style="left:55.6px;top:95.5px" width="31.8" height="31.8"><use href="#i-bin"/></svg>
<div class="lbl" style="left:41.5px;top:129.7px">Корзина</div>
<svg class="a" style="left:105.9px;top:95.5px" width="31.8" height="31.8"><use href="#i-rar"/></svg>
<div class="lbl" style="left:91.8px;top:129.7px">8_3_6_215...</div>
<svg class="a" style="left:156.3px;top:95.5px" width="31.8" height="31.8"><use href="#i-rar"/></svg>
<div class="lbl" style="left:142.2px;top:129.7px">8_3_6_215...</div>
<svg class="a" style="left:206.6px;top:95.5px" width="31.8" height="31.8"><use href="#i-ygear"/></svg>
<div class="lbl" style="left:192.5px;top:129.7px">ПереносД...</div>
<svg class="a" style="left:55.6px;top:163.7px" width="31.8" height="31.8"><use href="#i-1c7"/></svg>
<div class="lbl" style="left:41.5px;top:197.9px">1C<br>Предприятие</div>
<svg class="a" style="left:105.9px;top:163.7px" width="31.8" height="31.8"><use href="#i-excel"/></svg>
<div class="lbl" style="left:91.8px;top:197.9px">Взаиморасч...</div>
<svg class="a" style="left:156.3px;top:163.7px" width="31.8" height="31.8"><use href="#i-rar"/></svg>
<div class="lbl" style="left:142.2px;top:197.9px">1Cv7.zip</div>
<svg class="a" style="left:206.6px;top:163.7px" width="31.8" height="31.8"><use href="#i-ydb"/></svg>
<div class="lbl" style="left:192.5px;top:197.9px">Объединен...<br>Рарус Мага...</div>
<svg class="a" style="left:55.6px;top:232.0px" width="31.8" height="31.8"><use href="#i-adobe"/></svg>
<div class="lbl" style="left:41.5px;top:266.2px">Adobe Reader<br>X</div>
<svg class="a" style="left:105.9px;top:232.0px" width="31.8" height="31.8"><use href="#i-txt"/></svg>
<div class="lbl" style="left:91.8px;top:266.2px">Новый<br>текстовый...</div>
<svg class="a" style="left:156.3px;top:232.0px" width="31.8" height="31.8"><use href="#i-folder"/></svg>
<div class="lbl" style="left:142.2px;top:266.2px">ТетсОбмен</div>
<svg class="a" style="left:206.6px;top:232.0px" width="31.8" height="31.8"><use href="#i-ygear"/></svg>
<div class="lbl" style="left:192.5px;top:266.2px">ПереносДи...</div>
<svg class="a" style="left:55.6px;top:300.2px" width="31.8" height="31.8"><use href="#i-tv"/></svg>
<div class="lbl" style="left:41.5px;top:334.4px">TeamViewer 9</div>
<svg class="a" style="left:105.9px;top:300.2px" width="31.8" height="31.8"><use href="#i-admin"/></svg>
<div class="lbl" style="left:91.8px;top:334.4px">Администр...<br>серверов 1...</div>
<svg class="a" style="left:156.3px;top:300.2px" width="31.8" height="31.8"><use href="#i-folder"/></svg>
<div class="lbl" style="left:142.2px;top:334.4px">64</div>
<svg class="a" style="left:55.6px;top:368.5px" width="31.8" height="31.8"><use href="#i-folder"/></svg>
<div class="lbl" style="left:41.5px;top:402.7px">SportMaster</div>
<svg class="a" style="left:105.9px;top:368.5px" width="31.8" height="31.8"><use href="#i-folder"/></svg>
<div class="lbl" style="left:91.8px;top:402.7px">Images</div>
<svg class="a" style="left:156.3px;top:368.5px" width="31.8" height="31.8"><use href="#i-ygear"/></svg>
<div class="lbl" style="left:142.2px;top:402.7px">ЗагрузкаД...</div>
<svg class="a" style="left:55.6px;top:436.8px" width="31.8" height="31.8"><use href="#i-1c8"/></svg>
<div class="lbl" style="left:41.5px;top:471.0px">1C<br>Предприятие</div>
<svg class="a" style="left:105.9px;top:436.8px" width="31.8" height="31.8"><use href="#i-ygear"/></svg>
<div class="lbl" style="left:91.8px;top:471.0px">ЗагрузкаД...</div>
<svg class="a" style="left:55.6px;top:505.0px" width="31.8" height="31.8"><use href="#i-folder"/></svg>
<div class="lbl" style="left:41.5px;top:539.2px">8_3_6_215...</div>
<svg class="a" style="left:105.9px;top:505.0px" width="31.8" height="31.8"><use href="#i-ybox"/></svg>
<div class="lbl" style="left:91.8px;top:539.2px">Резервная<br>копия 01.0...</div>
<svg class="a" style="left:55.6px;top:573.3px" width="31.8" height="31.8"><use href="#i-folder"/></svg>
<div class="lbl" style="left:41.5px;top:607.5px">130317</div>
<svg class="a" style="left:105.9px;top:573.3px" width="31.8" height="31.8"><use href="#i-ybox"/></svg>
<div class="lbl" style="left:91.8px;top:607.5px">1Cv8.dt</div>
<svg class="a" style="left:55.6px;top:641.5px" width="31.8" height="31.8"><use href="#i-ybox"/></svg>
<div class="lbl" style="left:41.5px;top:675.7px">Розница<br>13.05.17 1...</div>
<svg class="a" style="left:105.9px;top:641.5px" width="31.8" height="31.8"><use href="#i-crck"/></svg>
<div class="lbl" style="left:91.8px;top:675.7px">crck.exe</div>
<!-- ===== MMC window: 1CV8 Servers ===== -->
<div class="a" style="left:313.100px;top:170.8px;width:847.300px;height:480.900px;background:#d7d4cd;box-shadow:inset 0 -0.700px 0 #4e5a6e,inset 0 0 0 2.700px #f1f0ed"></div>
<div class="a" style="left:316px;top:173.700px;width:842px;height:11.900px;background:#0a246a"></div>
<svg class="a" style="left:317.3px;top:174.3px" width="10.6" height="10.6" viewBox="0 0 32 32"><use href="#i-adminraw"/></svg>
<div class="t" style="left:329.3px;top:175.3px;font-size:7.6px;font-weight:700;color:#fff;line-height:10px">1CV8 Servers</div>
<div class="a" style="left:1123.6px;top:175.2px;width:10.4px;height:9.2px;background:#d7d4cd;box-shadow:inset 0.7px 0.7px 0 #fff,inset -0.7px -0.7px 0 #404040,inset -1.4px -1.4px 0 #808080"></div>
<div class="a" style="left:1125.8px;top:180.79999999999998px;width:4px;height:1.4px;background:#000"></div>
<div class="a" style="left:1134px;top:175.2px;width:10.4px;height:9.2px;background:#d7d4cd;box-shadow:inset 0.7px 0.7px 0 #fff,inset -0.7px -0.7px 0 #404040,inset -1.4px -1.4px 0 #808080"></div>
<div class="a" style="left:1135.8px;top:176.79999999999998px;width:6.0px;height:5.199999999999999px;border:0.8px solid #000;border-top-width:1.6px"></div>
<div class="a" style="left:1145.6px;top:175.2px;width:10.4px;height:9.2px;background:#d7d4cd;box-shadow:inset 0.7px 0.7px 0 #fff,inset -0.7px -0.7px 0 #404040,inset -1.4px -1.4px 0 #808080"></div>
<svg class="a" style="left:1147.6px;top:177.0px" width="5.800000000000001" height="4.999999999999999" viewBox="0 0 8 7"><path d="M0.800 0.500L7.200 6.500M7.200 0.500L0.800 6.500" stroke="#000" stroke-width="1.500"/></svg>
<div class="a" style="left:316px;top:185.700px;width:842px;height:0.900px;background:#f4f3f0"></div>
<svg class="a" style="left:317.3px;top:188.8px" width="11" height="11" viewBox="0 0 32 32"><use href="#i-adminraw"/></svg>
<div class="t" style="left:333px;top:190.5px;font-size:7.3px">Файл</div>
<div class="t" style="left:359.6px;top:190.5px;font-size:7.3px">Действие</div>
<div class="t" style="left:402.8px;top:190.5px;font-size:7.3px">Вид</div>
<div class="t" style="left:426.6px;top:190.5px;font-size:7.3px">Окно</div>
<div class="t" style="left:454.2px;top:190.5px;font-size:7.3px">Справка</div>
<div class="a" style="left:1123px;top:190.3px;width:9.6px;height:9.2px;background:#d7d4cd;box-shadow:inset 0.7px 0.7px 0 #fff,inset -0.7px -0.7px 0 #404040,inset -1.4px -1.4px 0 #808080"></div>
<div class="a" style="left:1125.2px;top:195.9px;width:4px;height:1.4px;background:#000"></div>
<div class="a" style="left:1132.6px;top:190.3px;width:10.6px;height:9.2px;background:#d7d4cd;box-shadow:inset 0.7px 0.7px 0 #fff,inset -0.7px -0.7px 0 #404040,inset -1.4px -1.4px 0 #808080"></div>
<div class="a" style="left:1136.0px;top:191.70000000000002px;width:4px;height:3.6px;border:0.7px solid #000;border-top-width:1.3px"></div>
<div class="a" style="left:1134.3999999999999px;top:193.70000000000002px;width:4px;height:3.6px;border:0.7px solid #000;border-top-width:1.3px;background:#d7d4cd"></div>
<div class="a" style="left:1145.2px;top:190.3px;width:10.6px;height:9.2px;background:#d7d4cd;box-shadow:inset 0.7px 0.7px 0 #fff,inset -0.7px -0.7px 0 #404040,inset -1.4px -1.4px 0 #808080"></div>
<svg class="a" style="left:1147.2px;top:192.10000000000002px" width="6.0" height="4.999999999999999" viewBox="0 0 8 7"><path d="M0.800 0.500L7.200 6.500M7.200 0.500L0.800 6.500" stroke="#808080" stroke-width="1.500"/></svg>
<div class="a" style="left:1120.600px;top:187.500px;width:0.700px;height:14px;background:#9a9a9a;box-shadow:0.700px 0 0 #fff"></div>
<div class="a" style="left:316px;top:201.6px;width:842px;height:0.7px;background:#9a9894"></div><div class="a" style="left:316px;top:202.3px;width:842px;height:0.7px;background:#fff"></div>
<div class="a" style="left:316px;top:218.6px;width:842px;height:0.7px;background:#808080"></div><div class="a" style="left:316px;top:219.3px;width:842px;height:0.7px;background:#fff"></div>
<svg class="a" style="left:318px;top:205.5px" width="12" height="11" viewBox="0 0 12 11"><path d="M0.800 5.500L5.500 1V3.600H11V7.400H5.500V10Z" fill="#9a9a9a" stroke="#707070" stroke-width=".6"/></svg>
<svg class="a" style="left:333px;top:205.5px" width="12" height="11" viewBox="0 0 12 11"><path d="M11.200 5.500L6.500 1V3.600H1V7.400H6.500V10Z" fill="#9a9a9a" stroke="#707070" stroke-width=".6"/></svg>
<div class="a" style="left:348.4px;top:204.5px;width:0.7px;height:13px;background:#a4a29e;box-shadow:0.7px 0 0 #fff"></div>
<svg class="a" style="left:354.5px;top:205px" width="12" height="12" viewBox="0 0 12 12"><path d="M1 4H4.500L5.500 5H11V11H1Z" fill="#f0d070" stroke="#b89830" stroke-width=".5"/><path d="M3 8C4 5 6 3.500 8 3L7.300 1.500L10.500 2.500L9.500 5.500L8.700 4.300C7 5 5.500 6.500 5 8.500Z" fill="#3aa83a" stroke="#1c7c1c" stroke-width=".3"/></svg>
<div class="a" style="left:368.6px;top:204px;width:14.4px;height:14px;background:#e8e6e1;box-shadow:inset 0.7px 0.7px 0 #808080,inset -0.7px -0.7px 0 #fff"></div>
<svg class="a" style="left:370.4px;top:205.5px" width="11" height="11" viewBox="0 0 11 11"><rect x=".5" y="1" width="10" height="9" fill="#fff" stroke="#6c84b4" stroke-width=".7"/><rect x=".5" y="1" width="10" height="2" fill="#8ca4d4"/><path d="M3.500 3V10" stroke="#6c84b4" stroke-width=".6"/><path d="M5 6.500L7.500 4.800V8.200Z" fill="#2a9a2a"/></svg>
<div class="a" style="left:385.4px;top:204.5px;width:0.7px;height:13px;background:#a4a29e;box-shadow:0.7px 0 0 #fff"></div>
<svg class="a" style="left:390px;top:205.800px" width="11" height="11" viewBox="0 0 11 11"><path d="M1 1.500L9.800 9.800M9.800 1.200L1.200 9.500" stroke="#e01c1c" stroke-width="2.300"/></svg>
<svg class="a" style="left:405px;top:205px" width="11" height="12" viewBox="0 0 11 12"><rect x="1" y="1" width="8.500" height="10" fill="#fff" stroke="#8c98b4" stroke-width=".7"/><path d="M2.500 3.500H8M2.500 5.500H8M2.500 7.500H8" stroke="#a8b4cc" stroke-width=".7"/><rect x="2.500" y="8.500" width="3" height="1.500" fill="#8cb4e4"/></svg>
<svg class="a" style="left:420px;top:205px" width="13" height="12" viewBox="0 0 13 12"><rect x="1" y="1" width="7.500" height="10" fill="#fff" stroke="#8c98b4" stroke-width=".7"/><path d="M2.500 3.500H7M2.500 5.500H7" stroke="#a8b4cc" stroke-width=".7"/><path d="M5.500 7H9V5L12.500 8L9 11V9H5.500Z" fill="#4cbc3c" stroke="#1c7c1c" stroke-width=".4"/></svg>
<div class="a" style="left:436.400px;top:204.5px;width:0.7px;height:13px;background:#a4a29e;box-shadow:0.7px 0 0 #fff"></div>
<svg class="a" style="left:441.500px;top:205px" width="10" height="12" viewBox="0 0 10 12"><rect x=".8" y=".8" width="8.400" height="10.400" fill="#2c4cc4" stroke="#14247c" stroke-width=".6"/><text x="5" y="9.300" text-anchor="middle" font-family="Liberation Sans" font-weight="700" font-size="9" fill="#fff">?</text></svg>
<svg class="a" style="left:456.500px;top:206.500px" width="11" height="10" viewBox="0 0 11 10"><rect x=".5" y=".5" width="10" height="9" fill="#fff" stroke="#8c8c9c" stroke-width=".7"/><rect x=".5" y=".5" width="10" height="2" fill="#a8b0c4"/><path d="M7 2.500V9.500" stroke="#8c8c9c" stroke-width=".6"/><path d="M3 6L5.200 4.500V7.500Z" fill="#2a9a2a"/></svg>
<div class="a" style="left:316px;top:220.800px;width:171.600px;height:413.700px;background:#fff;box-shadow:inset 0.7px 0.7px 0 #808080,inset -0.7px -0.7px 0 #d7d4cd,inset 1.4px 1.4px 0 #404040"></div>
<div class="a" style="left:490.400px;top:220.800px;width:667.600px;height:413.700px;background:#fff;box-shadow:inset 0.7px 0.7px 0 #808080,inset -0.7px -0.7px 0 #d7d4cd,inset 1.4px 1.4px 0 #404040"></div>
<div class="a" style="left:316px;top:634.500px;width:842px;height:2.300px;background:#f3f2ef"></div>
<svg class="a" style="left:320.4px;top:221.9px" width="10.6" height="10.6" viewBox="0 0 16 16"><use href="#tfolder"/></svg>
<div class="t" style="left:333.0px;top:222.8px;font-size:7.250px">Console Root</div>
<svg class="a" style="left:321.85px;top:234.75px" width="6.500" height="6.500" viewBox="0 0 6.500 6.500"><rect x=".35" y=".35" width="5.800" height="5.800" fill="#fff" stroke="#8e8e8e" stroke-width=".7"/><path d="M1.700 3.250H4.800" stroke="#222" stroke-width=".75"/></svg>
<svg class="a" style="left:333.0px;top:232.5px" width="10.6" height="10.6" viewBox="0 0 16 16"><use href="#tsrv"/></svg>
<div class="t" style="left:345.6px;top:233.4px;font-size:7.250px">1C:Enterprise 8.3 Central Servers</div>
<svg class="a" style="left:334.45px;top:245.35px" width="6.500" height="6.500" viewBox="0 0 6.500 6.500"><rect x=".35" y=".35" width="5.800" height="5.800" fill="#fff" stroke="#8e8e8e" stroke-width=".7"/><path d="M1.700 3.250H4.800" stroke="#222" stroke-width=".75"/></svg>
<svg class="a" style="left:345.6px;top:243.1px" width="10.6" height="10.6" viewBox="0 0 16 16"><use href="#tsrv2"/></svg>
<div class="t" style="left:358.2px;top:244.0px;font-size:7.250px">(*)Serv1CS</div>
<svg class="a" style="left:347.05px;top:255.95px" width="6.500" height="6.500" viewBox="0 0 6.500 6.500"><rect x=".35" y=".35" width="5.800" height="5.800" fill="#fff" stroke="#8e8e8e" stroke-width=".7"/><path d="M1.700 3.250H4.800" stroke="#222" stroke-width=".75"/></svg>
<svg class="a" style="left:358.2px;top:253.7px" width="10.6" height="10.6" viewBox="0 0 16 16"><use href="#tclus"/></svg>
<div class="t" style="left:370.8px;top:254.6px;font-size:7.250px">Кластеры</div>
<svg class="a" style="left:359.65px;top:266.55px" width="6.500" height="6.500" viewBox="0 0 6.500 6.500"><rect x=".35" y=".35" width="5.800" height="5.800" fill="#fff" stroke="#8e8e8e" stroke-width=".7"/><path d="M1.700 3.250H4.800" stroke="#222" stroke-width=".75"/></svg>
<svg class="a" style="left:370.8px;top:264.3px" width="10.6" height="10.6" viewBox="0 0 16 16"><use href="#tclus2"/></svg>
<div class="t" style="left:383.4px;top:265.2px;font-size:7.250px">Локальный кластер</div>
<svg class="a" style="left:372.25px;top:277.15px" width="6.500" height="6.500" viewBox="0 0 6.500 6.500"><rect x=".35" y=".35" width="5.800" height="5.800" fill="#fff" stroke="#8e8e8e" stroke-width=".7"/><path d="M1.700 3.250H4.800" stroke="#222" stroke-width=".75"/></svg>
<svg class="a" style="left:383.4px;top:274.9px" width="10.6" height="10.6" viewBox="0 0 16 16"><use href="#tdbs"/></svg>
<div class="t" style="left:396.0px;top:275.8px;font-size:7.250px">Информационные базы</div>
<svg class="a" style="left:384.85px;top:287.75px" width="6.500" height="6.500" viewBox="0 0 6.500 6.500"><rect x=".35" y=".35" width="5.800" height="5.800" fill="#fff" stroke="#8e8e8e" stroke-width=".7"/><path d="M1.700 3.250H4.800" stroke="#222" stroke-width=".75"/></svg>
<svg class="a" style="left:396.0px;top:285.5px" width="10.6" height="10.6" viewBox="0 0 16 16"><use href="#tdb"/></svg>
<div class="t" style="left:408.6px;top:286.4px;font-size:7.250px">Roznica</div>
<svg class="a" style="left:408.6px;top:296.1px" width="10.6" height="10.6" viewBox="0 0 16 16"><use href="#tuser"/></svg>
<div class="a" style="left:419.9px;top:296.4px;width:28.500px;height:10.300px;background:#d7d4cd"></div>
<div class="t" style="left:421.2px;top:297.0px;font-size:7.250px">Сеансы</div>
<svg class="a" style="left:397.45px;top:308.95px" width="6.500" height="6.500" viewBox="0 0 6.500 6.500"><rect x=".35" y=".35" width="5.800" height="5.800" fill="#fff" stroke="#8e8e8e" stroke-width=".7"/><path d="M1.700 3.250H4.800" stroke="#222" stroke-width=".75"/><path d="M3.250 1.700V4.800" stroke="#222" stroke-width=".75"/></svg>
<svg class="a" style="left:408.6px;top:306.7px" width="10.6" height="10.6" viewBox="0 0 16 16"><use href="#tlock"/></svg>
<div class="t" style="left:421.2px;top:307.6px;font-size:7.250px">Блокировки</div>
<svg class="a" style="left:397.45px;top:319.55px" width="6.500" height="6.500" viewBox="0 0 6.500 6.500"><rect x=".35" y=".35" width="5.800" height="5.800" fill="#fff" stroke="#8e8e8e" stroke-width=".7"/><path d="M1.700 3.250H4.800" stroke="#222" stroke-width=".75"/><path d="M3.250 1.700V4.800" stroke="#222" stroke-width=".75"/></svg>
<svg class="a" style="left:408.6px;top:317.3px" width="10.6" height="10.6" viewBox="0 0 16 16"><use href="#tconn"/></svg>
<div class="t" style="left:421.2px;top:318.2px;font-size:7.250px">Соединения</div>
<svg class="a" style="left:372.25px;top:330.15px" width="6.500" height="6.500" viewBox="0 0 6.500 6.500"><rect x=".35" y=".35" width="5.800" height="5.800" fill="#fff" stroke="#8e8e8e" stroke-width=".7"/><path d="M1.700 3.250H4.800" stroke="#222" stroke-width=".75"/><path d="M3.250 1.700V4.800" stroke="#222" stroke-width=".75"/></svg>
<svg class="a" style="left:383.4px;top:327.9px" width="10.6" height="10.6" viewBox="0 0 16 16"><use href="#twsrv"/></svg>
<div class="t" style="left:396.0px;top:328.8px;font-size:7.250px">Рабочие серверы</div>
<svg class="a" style="left:372.25px;top:340.75px" width="6.500" height="6.500" viewBox="0 0 6.500 6.500"><rect x=".35" y=".35" width="5.800" height="5.800" fill="#fff" stroke="#8e8e8e" stroke-width=".7"/><path d="M1.700 3.250H4.800" stroke="#222" stroke-width=".75"/><path d="M3.250 1.700V4.800" stroke="#222" stroke-width=".75"/></svg>
<svg class="a" style="left:383.4px;top:338.5px" width="10.6" height="10.6" viewBox="0 0 16 16"><use href="#tadm"/></svg>
<div class="t" style="left:396.0px;top:339.4px;font-size:7.250px">Администраторы</div>
<svg class="a" style="left:372.25px;top:351.35px" width="6.500" height="6.500" viewBox="0 0 6.500 6.500"><rect x=".35" y=".35" width="5.800" height="5.800" fill="#fff" stroke="#8e8e8e" stroke-width=".7"/><path d="M1.700 3.250H4.800" stroke="#222" stroke-width=".75"/><path d="M3.250 1.700V4.800" stroke="#222" stroke-width=".75"/></svg>
<svg class="a" style="left:383.4px;top:349.1px" width="10.6" height="10.6" viewBox="0 0 16 16"><use href="#tmgr"/></svg>
<div class="t" style="left:396.0px;top:350.0px;font-size:7.250px">Менеджеры кластера</div>
<svg class="a" style="left:372.25px;top:361.95px" width="6.500" height="6.500" viewBox="0 0 6.500 6.500"><rect x=".35" y=".35" width="5.800" height="5.800" fill="#fff" stroke="#8e8e8e" stroke-width=".7"/><path d="M1.700 3.250H4.800" stroke="#222" stroke-width=".75"/><path d="M3.250 1.700V4.800" stroke="#222" stroke-width=".75"/></svg>
<svg class="a" style="left:383.4px;top:359.7px" width="10.6" height="10.6" viewBox="0 0 16 16"><use href="#tproc"/></svg>
<div class="t" style="left:396.0px;top:360.6px;font-size:7.250px">Рабочие процессы</div>
<svg class="a" style="left:372.25px;top:372.55px" width="6.500" height="6.500" viewBox="0 0 6.500 6.500"><rect x=".35" y=".35" width="5.800" height="5.800" fill="#fff" stroke="#8e8e8e" stroke-width=".7"/><path d="M1.700 3.250H4.800" stroke="#222" stroke-width=".75"/><path d="M3.250 1.700V4.800" stroke="#222" stroke-width=".75"/></svg>
<svg class="a" style="left:383.4px;top:370.3px" width="10.6" height="10.6" viewBox="0 0 16 16"><use href="#tuser"/></svg>
<div class="t" style="left:396.0px;top:371.2px;font-size:7.250px">Сеансы</div>
<svg class="a" style="left:372.25px;top:383.15px" width="6.500" height="6.500" viewBox="0 0 6.500 6.500"><rect x=".35" y=".35" width="5.800" height="5.800" fill="#fff" stroke="#8e8e8e" stroke-width=".7"/><path d="M1.700 3.250H4.800" stroke="#222" stroke-width=".75"/><path d="M3.250 1.700V4.800" stroke="#222" stroke-width=".75"/></svg>
<svg class="a" style="left:383.4px;top:380.9px" width="10.6" height="10.6" viewBox="0 0 16 16"><use href="#tlock"/></svg>
<div class="t" style="left:396.0px;top:381.8px;font-size:7.250px">Блокировки</div>
<svg class="a" style="left:372.25px;top:393.75px" width="6.500" height="6.500" viewBox="0 0 6.500 6.500"><rect x=".35" y=".35" width="5.800" height="5.800" fill="#fff" stroke="#8e8e8e" stroke-width=".7"/><path d="M1.700 3.250H4.800" stroke="#222" stroke-width=".75"/><path d="M3.250 1.700V4.800" stroke="#222" stroke-width=".75"/></svg>
<svg class="a" style="left:383.4px;top:391.5px" width="10.6" height="10.6" viewBox="0 0 16 16"><use href="#tconn"/></svg>
<div class="t" style="left:396.0px;top:392.4px;font-size:7.250px">Соединения</div>
<svg class="a" style="left:372.25px;top:404.35px" width="6.500" height="6.500" viewBox="0 0 6.500 6.500"><rect x=".35" y=".35" width="5.800" height="5.800" fill="#fff" stroke="#8e8e8e" stroke-width=".7"/><path d="M1.700 3.250H4.800" stroke="#222" stroke-width=".75"/><path d="M3.250 1.700V4.800" stroke="#222" stroke-width=".75"/></svg>
<svg class="a" style="left:383.4px;top:402.1px" width="10.6" height="10.6" viewBox="0 0 16 16"><use href="#tsec"/></svg>
<div class="t" style="left:396.0px;top:403.0px;font-size:7.250px">Профили безопасности</div>
<svg class="a" style="left:347.05px;top:414.95px" width="6.500" height="6.500" viewBox="0 0 6.500 6.500"><rect x=".35" y=".35" width="5.800" height="5.800" fill="#fff" stroke="#8e8e8e" stroke-width=".7"/><path d="M1.700 3.250H4.800" stroke="#222" stroke-width=".75"/><path d="M3.250 1.700V4.800" stroke="#222" stroke-width=".75"/></svg>
<svg class="a" style="left:358.2px;top:412.7px" width="10.6" height="10.6" viewBox="0 0 16 16"><use href="#tadm"/></svg>
<div class="t" style="left:370.8px;top:413.6px;font-size:7.250px">Администраторы</div>
<div class="a" style="left:491.800px;top:221.800px;width:664.800px;height:11.200px;background:#d7d4cd"></div>
<div class="a" style="left:492px;top:221.800px;width:49.2px;height:11.200px;background:#d7d4cd;box-shadow:inset 0.7px 0.7px 0 #fff,inset -0.7px -0.7px 0 #404040,inset -1.4px -1.4px 0 #808080"></div>
<div class="t" style="left:495.7px;top:223.900px;font-size:7.250px">Инф. база</div>
<div class="a" style="left:541.2px;top:221.800px;width:61.2px;height:11.200px;background:#d7d4cd;box-shadow:inset 0.7px 0.7px 0 #fff,inset -0.7px -0.7px 0 #404040,inset -1.4px -1.4px 0 #808080"></div>
<div class="t" style="left:541.2px;width:58.0px;text-align:right;top:223.900px;font-size:7.250px">Номер сеанса</div>
<div class="a" style="left:602.4px;top:221.800px;width:156.4px;height:11.200px;background:#d7d4cd;box-shadow:inset 0.7px 0.7px 0 #fff,inset -0.7px -0.7px 0 #404040,inset -1.4px -1.4px 0 #808080"></div>
<div class="t" style="left:606.1px;top:223.900px;font-size:7.250px">Время начала</div>
<div class="a" style="left:758.8px;top:221.800px;width:93.2px;height:11.200px;background:#d7d4cd;box-shadow:inset 0.7px 0.7px 0 #fff,inset -0.7px -0.7px 0 #404040,inset -1.4px -1.4px 0 #808080"></div>
<div class="t" style="left:762.5px;top:223.900px;font-size:7.250px">Последняя активность</div>
<div class="a" style="left:852px;top:221.800px;width:86.2px;height:11.200px;background:#d7d4cd;box-shadow:inset 0.7px 0.7px 0 #fff,inset -0.7px -0.7px 0 #404040,inset -1.4px -1.4px 0 #808080"></div>
<div class="t" style="left:855.7px;top:223.900px;font-size:7.250px">Компьютер</div>
<div class="a" style="left:938.2px;top:221.800px;width:102.0px;height:11.200px;background:#d7d4cd;box-shadow:inset 0.7px 0.7px 0 #fff,inset -0.7px -0.7px 0 #404040,inset -1.4px -1.4px 0 #808080"></div>
<div class="t" style="left:941.9px;top:223.900px;font-size:7.250px">Пользователь</div>
<div class="a" style="left:1040.2px;top:221.800px;width:79.8px;height:11.200px;background:#d7d4cd;box-shadow:inset 0.7px 0.7px 0 #fff,inset -0.7px -0.7px 0 #404040,inset -1.4px -1.4px 0 #808080"></div>
<div class="t" style="left:1040.2px;width:76.6px;text-align:right;top:223.900px;font-size:7.250px">Приложение</div>
<div class="a" style="left:1120px;top:221.800px;width:34.0px;height:11.200px;background:#d7d4cd;box-shadow:inset 0.7px 0.7px 0 #fff,inset -0.7px -0.7px 0 #404040,inset -1.4px -1.4px 0 #808080"></div>
<div class="t" style="left:1123.7px;top:223.900px;font-size:7.250px">Язык</div>
<div class="a" style="left:504.600px;top:233.4px;width:652px;height:11.400px;background:#0a246a"></div>
<svg class="a" style="left:493.600px;top:233.5px" width="10.600" height="10.600" viewBox="0 0 16 16"><use href="#tuserd"/></svg>
<div class="t" style="left:505.600px;top:234.9px;font-size:7.350px;letter-spacing:-0.220px;color:#fff">Roznica</div>
<div class="t" style="left:560px;width:39.200px;text-align:right;top:234.9px;font-size:7.350px;color:#fff">244</div>
<div class="t" style="left:607.200px;top:234.9px;font-size:7.350px;color:#fff">13.08.2017 16:09:14</div>
<div class="t" style="left:763px;top:234.9px;font-size:7.350px;color:#fff">13.08.2017 16:09:14</div>
<div class="t" style="left:856.600px;top:234.9px;font-size:7.350px;color:#fff">Serv1CS</div>
<div class="t" style="left:942px;top:234.9px;font-size:7.350px;color:#fff">DefUser</div>
<div class="t" style="left:1040px;width:76.200px;text-align:right;top:234.9px;font-size:7.350px;color:#fff">Фоновое задание</div>
<div class="t" style="left:1124.600px;top:234.9px;font-size:7.350px;color:#fff">русс...</div>
<svg class="a" style="left:493.600px;top:244.8px" width="10.600" height="10.600" viewBox="0 0 16 16"><use href="#tuser2"/></svg>
<div class="t" style="left:505.600px;top:246.2px;font-size:7.350px;letter-spacing:-0.220px;color:#000">Roznica</div>
<div class="t" style="left:560px;width:39.200px;text-align:right;top:246.2px;font-size:7.350px;color:#000">242</div>
<div class="t" style="left:607.200px;top:246.2px;font-size:7.350px;color:#000">13.08.2017 16:07:12</div>
<div class="t" style="left:763px;top:246.2px;font-size:7.350px;color:#000">13.08.2017 16:07:12</div>
<div class="t" style="left:856.600px;top:246.2px;font-size:7.350px;color:#000">Serv1CS</div>
<div class="t" style="left:942px;top:246.2px;font-size:7.350px;color:#000">DefUser</div>
<div class="t" style="left:1040px;width:76.200px;text-align:right;top:246.2px;font-size:7.350px;color:#000">Фоновое задание</div>
<div class="t" style="left:1124.600px;top:246.2px;font-size:7.350px;color:#000">русс...</div>
<svg class="a" style="left:493.600px;top:256.1px" width="10.600" height="10.600" viewBox="0 0 16 16"><use href="#tuser2"/></svg>
<div class="t" style="left:505.600px;top:257.5px;font-size:7.350px;letter-spacing:-0.220px;color:#000">Roznica</div>
<div class="t" style="left:560px;width:39.200px;text-align:right;top:257.5px;font-size:7.350px;color:#000">235</div>
<div class="t" style="left:607.200px;top:257.5px;font-size:7.350px;color:#000">13.08.2017 9:00:00</div>
<div class="t" style="left:763px;top:257.5px;font-size:7.350px;color:#000">13.08.2017 16:10:17</div>
<div class="t" style="left:856.600px;top:257.5px;font-size:7.350px;color:#000">Serv1CS</div>
<div class="t" style="left:942px;top:257.5px;font-size:7.350px;color:#000">DefUser</div>
<div class="t" style="left:1040px;width:76.200px;text-align:right;top:257.5px;font-size:7.350px;color:#000">Фоновое задание</div>
<div class="t" style="left:1124.600px;top:257.5px;font-size:7.350px;color:#000">русс...</div>
<svg class="a" style="left:493.600px;top:267.4px" width="10.600" height="10.600" viewBox="0 0 16 16"><use href="#tuser2"/></svg>
<div class="t" style="left:505.600px;top:268.8px;font-size:7.350px;letter-spacing:-0.220px;color:#000">Roznica</div>
<div class="t" style="left:560px;width:39.200px;text-align:right;top:268.8px;font-size:7.350px;color:#000">240</div>
<div class="t" style="left:607.200px;top:268.8px;font-size:7.350px;color:#000">13.08.2017 10:28:20</div>
<div class="t" style="left:763px;top:268.8px;font-size:7.350px;color:#000">13.08.2017 16:10:17</div>
<div class="t" style="left:856.600px;top:268.8px;font-size:7.350px;color:#000">POS01753</div>
<div class="t" style="left:942px;top:268.8px;font-size:7.350px;color:#000">DefUser</div>
<div class="t" style="left:1040px;width:76.200px;text-align:right;top:268.8px;font-size:7.350px;color:#000">ImplAppID</div>
<div class="t" style="left:1124.600px;top:268.8px;font-size:7.350px;color:#000">русс...</div>
<svg class="a" style="left:493.600px;top:278.7px" width="10.600" height="10.600" viewBox="0 0 16 16"><use href="#tuser2"/></svg>
<div class="t" style="left:505.600px;top:280.1px;font-size:7.350px;letter-spacing:-0.220px;color:#000">Roznica</div>
<div class="t" style="left:560px;width:39.200px;text-align:right;top:280.1px;font-size:7.350px;color:#000">245</div>
<div class="t" style="left:607.200px;top:280.1px;font-size:7.350px;color:#000">13.08.2017 16:12:54</div>
<div class="t" style="left:763px;top:280.1px;font-size:7.350px;color:#000">13.08.2017 16:12:54</div>
<div class="t" style="left:856.600px;top:280.1px;font-size:7.350px;color:#000">Serv1CS</div>
<div class="t" style="left:942px;top:280.1px;font-size:7.350px;color:#000">DefUser</div>
<div class="t" style="left:1040px;width:76.200px;text-align:right;top:280.1px;font-size:7.350px;color:#000">ImplAppID</div>
<div class="t" style="left:1124.600px;top:280.1px;font-size:7.350px;color:#000">русс...</div>
<svg class="a" style="left:493.600px;top:290.0px" width="10.600" height="10.600" viewBox="0 0 16 16"><use href="#tuser2"/></svg>
<div class="t" style="left:505.600px;top:291.4px;font-size:7.350px;letter-spacing:-0.220px;color:#000">Roznica</div>
<div class="t" style="left:560px;width:39.200px;text-align:right;top:291.4px;font-size:7.350px;color:#000">208</div>
<div class="t" style="left:607.200px;top:291.4px;font-size:7.350px;color:#000">12.08.2017 14:21:11</div>
<div class="t" style="left:763px;top:291.4px;font-size:7.350px;color:#000">13.08.2017 16:10:17</div>
<div class="t" style="left:856.600px;top:291.4px;font-size:7.350px;color:#000">Serv1CS</div>
<div class="t" style="left:942px;top:291.4px;font-size:7.350px;color:#000">DefUser</div>
<div class="t" style="left:1040px;width:76.200px;text-align:right;top:291.4px;font-size:7.350px;color:#000">Фоновое задание</div>
<div class="t" style="left:1124.600px;top:291.4px;font-size:7.350px;color:#000">русс...</div>
<div class="a" style="left:491.800px;top:624.400px;width:664.800px;height:10px;background:#ebe9e4"></div>
<div class="a" style="left:491.8px;top:624.400px;width:10.400px;height:10px;background:#d7d4cd;box-shadow:inset 0.7px 0.7px 0 #fff,inset -0.7px -0.7px 0 #404040,inset -1.4px -1.4px 0 #808080"></div>
<svg class="a" style="left:491.8px;top:624.400px" width="10.400" height="10" viewBox="0 0 10.400 10"><path d="M6.300 2.500L3.500 5L6.300 7.500Z" fill="#000"/></svg>
<div class="a" style="left:1146.2px;top:624.400px;width:10.400px;height:10px;background:#d7d4cd;box-shadow:inset 0.7px 0.7px 0 #fff,inset -0.7px -0.7px 0 #404040,inset -1.4px -1.4px 0 #808080"></div>
<svg class="a" style="left:1146.2px;top:624.400px" width="10.400" height="10" viewBox="0 0 10.400 10"><path d="M4 2.500L6.800 5L4 7.500Z" fill="#000"/></svg>
<div class="a" style="left:502.200px;top:624.400px;width:131.800px;height:10px;background:#d7d4cd;box-shadow:inset 0.7px 0.7px 0 #fff,inset -0.7px -0.7px 0 #404040,inset -1.4px -1.4px 0 #808080"></div>
<div class="a" style="left:316px;top:636.800px;width:696.6px;height:11.400px;box-shadow:inset 0.7px 0.7px 0 #808080,inset -0.7px -0.7px 0 #fff"></div>
<div class="a" style="left:1013.8px;top:636.800px;width:85.8px;height:11.400px;box-shadow:inset 0.7px 0.7px 0 #808080,inset -0.7px -0.7px 0 #fff"></div>
<div class="a" style="left:1100.8px;top:636.800px;width:56.8px;height:11.400px;box-shadow:inset 0.7px 0.7px 0 #808080,inset -0.7px -0.7px 0 #fff"></div>
<!-- ===== TeamViewer in-session toolbar ===== -->
<svg class="a" style="left:0;top:0" width="1366" height="60" viewBox="0 0 1366 60">
<defs><linearGradient id="gTb" x1="0" y1="0" x2="0" y2="1"><stop offset="0" stop-color="#86acdc"/><stop offset=".08" stop-color="#6f9ad2"/><stop offset=".47" stop-color="#4a7dc4"/><stop offset=".5" stop-color="#10459a"/><stop offset=".92" stop-color="#0c3e8e"/><stop offset=".93" stop-color="#6e98d4"/><stop offset="1" stop-color="#5585c8"/></linearGradient>
<linearGradient id="gWt" x1="0" y1="0" x2="0" y2="1"><stop offset="0" stop-color="#e9e9e9"/><stop offset=".25" stop-color="#f7f7f7"/><stop offset="1" stop-color="#fdfdfd"/></linearGradient></defs>
<path d="M397.500 23H968.500L952 40H414.500Z" fill="url(#gTb)"/><path d="M396.500 22.500H969.500" stroke="#0a1c40" stroke-width="1.200"/>
<!-- pin button -->
<rect x="416.800" y="23.400" width="14" height="13.400" rx="2" fill="rgba(10,40,100,.45)" stroke="rgba(10,30,80,.55)" stroke-width=".6"/>
<path d="M421 30h2.400M423.400 27.600v4.800M427.600 27.600v4.800M423.400 30h4.200" stroke="#fff" stroke-width="1.500" fill="none"/>
<rect x="423.400" y="28.700" width="4.200" height="2.600" fill="#fff"/>
<!-- controls -->
<rect x="908.800" y="31.700" width="5.200" height="1.600" fill="#fff"/>
<rect x="924.800" y="26.800" width="5" height="4.600" fill="none" stroke="#e8f0fc" stroke-width="1.100"/>
<rect x="922.800" y="29" width="5" height="4.600" fill="#2a5cac" stroke="#e8f0fc" stroke-width="1.100"/>
<path d="M939 28.200l5.400 5M944.400 28.200l-5.400 5" stroke="#fff" stroke-width="1.700"/>
<!-- white tab -->
<path d="M1079.500 22H1154.500L1146 38.200Q1145 40 1143 40H1092Q1090 40 1089 38.200Z" fill="url(#gWt)"/>
<path d="M1117.500 25.500V36.500" stroke="#d0d0d0" stroke-width="1"/>
<!-- fullscreen icon -->
<g stroke="#696969" stroke-width="1.500" fill="none"><path d="M1102.300 29.200V26.300H1105.200M1108.600 26.300H1111.500V29.200M1111.500 32.600V35.500H1108.600M1105.200 35.500H1102.300V32.600"/><path d="M1102.800 26.800L1105.600 29.600M1111 26.800L1108.200 29.600M1111 35L1108.200 32.200M1102.800 35L1105.600 32.200" stroke-width="1.100"/></g>
<!-- chevron -->
<path d="M1123.600 27.600H1126.200L1129 30.600L1131.800 27.600H1134.400V29.200L1129 34.600L1123.600 29.200Z" fill="#6f6f6f"/>
<!-- small swap button -->
<defs><linearGradient id="gSw" x1="0" y1="0" x2="0" y2="1"><stop offset="0" stop-color="#9cbae2"/><stop offset=".45" stop-color="#7a9ed0"/><stop offset=".52" stop-color="#3a6096"/><stop offset="1" stop-color="#5c86ba"/></linearGradient></defs>
<rect x="1217.600" y="23.200" width="19.800" height="12.400" rx="1.500" fill="url(#gSw)" stroke="#a4c0e4" stroke-width=".7"/><path d="M1217.600 22.800H1237.400" stroke="#0a1430" stroke-width="1"/>
<path d="M1222.800 28.800l2.800-2.300v1.300h4v-1.300l2.800 2.300-2.800 2.300v-1.300h-4v1.300z" fill="#fff"/>
</svg>
<div class="t" style="left:653px;width:60px;text-align:center;top:26.800px;font-size:8.100px;letter-spacing:-0.150px;color:#fff;line-height:10px">serv1CS</div>
<!-- watermark -->
<div class="t" style="left:1115px;width:200px;text-align:right;top:679.700px;font-size:7.850px;font-weight:700;color:#fff;text-shadow:0.5px 0.6px 0.5px rgba(0,0,0,.55)">Тестовый режим</div>
<div class="t" style="left:1115px;width:200px;text-align:right;top:689.200px;font-size:7.800px;font-weight:700;color:#fff;text-shadow:0.5px 0.6px 0.5px rgba(0,0,0,.55)">Windows Server 2008 R2 Standard</div>
<div class="t" style="left:1115px;width:200px;text-align:right;top:700px;font-size:7.150px;color:#fff;text-shadow:0.5px 0.6px 0.5px rgba(0,0,0,.55)">Сборка 7601</div>
<!-- TV side tab -->
<svg class="a" style="left:1302px;top:638px" width="18" height="37" viewBox="0 0 18 37"><path d="M18 1.300H3.500Q1 1.300 1 3.800V25.500L18 35.500Z" fill="#6d6c70" stroke="#0e3568" stroke-width="1"/><path d="M5 4.800L14.500 5.300Q15.800 5.400 15.800 6.600V17.400Q15.800 18.600 14.500 18.400L5 17.200Q4 17 4 16V5.800Q4 4.800 5 4.800Z" fill="#0d4fa0"/><circle cx="9.800" cy="11.400" r="3.900" fill="#d2d2d4"/><path d="M6.800 11.400l2-1.500v.9h2v-.9l2 1.500-2 1.500v-.9h-2v.9z" fill="#0d3a78"/></svg>
<!-- icon peeking behind MMC window -->
<svg class="a" style="left:862px;top:164px" width="30" height="8" viewBox="0 0 30 8"><path d="M7 7V2.500Q7 1.500 8 1.500H24L27.500 5V7Z" fill="#f4f6f8"/><rect x="1" y="4.500" width="9" height="3" fill="#cfe0c4"/><path d="M24 1.500V5H27.500Z" fill="#dfe4ea"/></svg>
<!-- ===== Fading TeamViewer dialog (very low opacity, perspective) ===== -->
<div class="a" style="left:456.1px;top:276.4px;width:461.0px;height:175.2px;transform-origin:0 0;transform:matrix3d(0.98997644,0.00000000,0.00000000,-0.00002174,0.02123847,1.02416626,0.00000000,0.00019181,0.00000000,0.00000000,1.00000000,0.00000000,0.00000000,0.00000000,0.00000000,1.00000000);opacity:.17">
<div class="a" style="left:0;top:0;width:461.0px;height:175.2px;border-radius:6px;background:#e4ebf3;border:1px solid #666;box-shadow:0 2px 14px 4px rgba(0,0,0,.55)"></div>
<div class="a" style="left:2.9px;top:27.5px;width:453.5px;height:140.2px;background:#fff;border:1px solid #777"></div>
<div class="a" style="left:3.9px;top:126.0px;width:451.5px;height:40.7px;background:#f0f0f0;border-top:1px solid #bbb"></div>
<div class="a" style="left:412.4px;top:1.2px;width:43.7px;height:16.9px;border-radius:0 0 4px 4px;background:linear-gradient(180deg,#e08a80,#c8281c 50%,#b81c10);border:1px solid #5c1c14"></div>
<svg class="a" style="left:429.3px;top:5.1px" width="10" height="9" viewBox="0 0 10 9"><path d="M1 0.800L9 8.200M9 0.800L1 8.200" stroke="#fff" stroke-width="2.400"/></svg>
<svg class="a" style="left:0.8px;top:6.5px" width="12.500" height="14.500" viewBox="0 0 32 32" preserveAspectRatio="none"><path d="M6 1.500H25Q27 1.500 27 3.500V27.500Q27 29 25 29H6Q4.500 29 4.500 27.500V3.500Q4.500 1.500 6 1.500Z" fill="#1c86e0"/><circle cx="15.500" cy="15.500" r="9.300" fill="#fff"/><path d="M7.500 15.500L12.500 11.700V14H18V11.700L23 15.500L18 19.300V17H12.500V19.300Z" fill="#1c86e0"/></svg>
<div class="t" style="left:19.5px;top:6.4px;font-size:11px;line-height:15px;color:#000">Сведения</div>
<svg class="a" style="left:8.9px;top:37.9px" width="41.1" height="48.6" viewBox="0 0 42 48" preserveAspectRatio="none"><path d="M4 1H36Q39 1 39 4V42Q39 45 36 45H4Q1 45 1 42V4Q1 1 4 1Z" fill="#2c8ce8"/><path d="M37 3L41.500 6V47.500L37 44.500Z" fill="#1464c4"/><circle cx="19.500" cy="23" r="15" fill="#fff"/><path d="M7.500 23L16 16.500V20.300H23V16.500L31.500 23L23 29.500V25.700H16V29.500Z" fill="#2c8ce8"/></svg>
<div class="a" style="left:79.5px;top:102.3px;width:11.7px;height:11.5px;border:1px solid #555;background:#fff"></div>
<div class="t" style="left:96.0px;top:101.3px;font-size:10.700px;letter-spacing:-0.150px;line-height:14px;color:#000">Больше не показывать данный диалог.</div>
<div class="a" style="left:282.8px;top:139.6px;width:75.5px;height:18.3px;border:1.500px solid #666;border-radius:3px;background:linear-gradient(180deg,#f2f2f2,#ddd);text-align:center;font-size:11.200px;line-height:15.3px;color:#000">Переслать</div>
<div class="a" style="left:365.0px;top:139.4px;width:75.0px;height:18.3px;border:1.500px solid #2c84c8;border-radius:3px;background:linear-gradient(180deg,#eaf6fd,#bee6fd);text-align:center;font-size:11.200px;line-height:15.3px;color:#000">Отмена</div>
</div>
<!-- ===== Remote (classic) taskbar ===== -->
<div class="a" style="left:47px;top:709px;width:1272px;height:30px;background:#d7d4cd"></div>
<div class="a" style="left:47px;top:709.6px;width:1272px;height:0.8px;background:#fff"></div>
<!-- Start button -->
<div class="a" style="left:48.6px;top:712.2px;width:33px;height:24.4px;background:#d7d4cd;box-shadow:inset 0.7px 0.7px 0 #fff,inset -0.7px -0.7px 0 #404040,inset -1.4px -1.4px 0 #808080"></div>
<svg class="a" style="left:49.800px;top:718.300px" width="10.500" height="10.500" viewBox="0 0 10.500 10.500"><path d="M1.600 1.800C2.800 0.800 4 0.900 5.200 1.700L4.400 4.800C3.300 4.100 2 4.100 0.800 5Z" fill="#e8582c"/><path d="M5.700 1.900C6.900 2.700 8.200 2.800 9.700 1.800L8.900 4.900C7.500 5.800 6.200 5.700 5 4.900Z" fill="#7cb342"/><path d="M0.700 5.600C1.800 4.700 3.100 4.700 4.300 5.400L3.500 8.600C2.400 7.900 1.100 8 0 8.900Z" fill="#3f7fd0"/><path d="M4.800 5.600C6 6.400 7.300 6.400 8.700 5.500L8 8.700C6.600 9.600 5.200 9.500 4 8.700Z" fill="#f4b400"/></svg>
<div class="t" style="left:60.8px;top:720.200px;font-size:7.5px;font-weight:700;color:#000">Пуск</div>
<!-- grip -->
<div class="a" style="left:87.200px;top:713.400px;width:0.900px;height:22.400px;background:#fbfbfa;box-shadow:0.700px 0 0 #9c9a96"></div>
<!-- quick launch: server manager -->
<svg class="a" style="left:101.500px;top:713.800px" width="20" height="21" viewBox="0 0 20 21"><path d="M1 1L5.500 0.500V14.500L1 14Z" fill="#e4e8ea" stroke="#5c6468" stroke-width=".4"/><path d="M1 2.500H5.500M1 4.300H5.500M1 6.100H5.500M1 7.900H5.500M1 9.700H5.500M1 11.500H5.500" stroke="#6c747a" stroke-width=".7"/><path d="M5.500 0.500L12 1V14L5.500 14.500Z" fill="#70787e"/><path d="M5.500 0.500L12 1V5L5.500 6Z" fill="#8c949a"/><path d="M2 12.500L8 9.500L18.500 12L18.500 18L12 20.500L2 17.500Z" fill="#64747e" stroke="#3c464e" stroke-width=".5"/><path d="M2 12.500L8 9.500L18.500 12L12 14.500Z" fill="#a4b4bc"/><path d="M12 14.500V20.500" stroke="#3c464e" stroke-width=".5"/><path d="M7.500 11.500C7.500 8 13 8 13.500 12" stroke="#3c464e" stroke-width="1.100" fill="none"/><rect x="6" y="15.200" width="2.500" height="1.600" fill="#c8d4da"/></svg>
<!-- powershell -->
<svg class="a" style="left:134px;top:715.5px" width="18" height="16" viewBox="0 0 18 16"><path d="M3.500 1.500h13.500l-3 13h-13.500z" fill="#3a8bd6" stroke="#1f5fa8" stroke-width=".8"/><path d="M4 2.200h12.300l-1 4.500c-4 .5-8-.5-12.300 1z" fill="#7fbaf0" opacity=".7"/><path d="M5.500 4.500l4.500 3.500-5.500 3.500" stroke="#fff" stroke-width="1.500" fill="none"/><path d="M9.500 12h4" stroke="#fff" stroke-width="1.300"/></svg>
<!-- explorer -->
<svg class="a" style="left:165.500px;top:715.200px" width="22.500" height="20.500" viewBox="0 0 22 19" preserveAspectRatio="none"><path d="M1 3.500h7l1.500 1.500h11v11h-19.500z" fill="#e9c45c"/><rect x="2" y="5" width="18.500" height="3" fill="#fbf3d0"/><rect x="3" y="3.800" width="2" height="1.200" fill="#d9534f"/><rect x="6" y="3.800" width="2" height="1.200" fill="#5cb85c"/><path d="M1 7.500h20.500v9h-20.500z" fill="#f3d678"/><path d="M4 18v-6c0-1.500 1-2.500 2.500-2.500h9c1.500 0 2.500 1 2.500 2.500v6h-3v-3.500h-8v3.500z" fill="#8fc0e8" stroke="#5d95c8" stroke-width=".6"/></svg>
<!-- task button active -->
<div class="a" style="left:193.6px;top:712.2px;width:104.600px;height:24.400px;background:#fff;box-shadow:inset 0.7px 0.7px 0 #404040,inset -0.7px -0.7px 0 #fff,inset 1.4px 1.4px 0 #808080"></div>
<svg class="a" style="left:197.800px;top:713.800px" width="17" height="21" viewBox="0 0 17 21"><path d="M0.600 4.600C2 1 9.500 0.300 12.600 3.600L10.800 5.600L8.500 4.600H5L3.500 5.800L1.600 4.300Z" fill="#c8ccd0" stroke="#2c2c2c" stroke-width=".7"/><rect x="4.600" y="4.600" width="3" height="2.400" fill="#9a9ea2" stroke="#2c2c2c" stroke-width=".5"/><rect x="3.700" y="7" width="4" height="13.200" rx="1" fill="#e8d840" stroke="#3c3808" stroke-width=".8"/><path d="M5 8V19" stroke="#fbf4a0" stroke-width=".8"/><rect x="8" y="7.800" width="8.300" height="9.800" fill="#fff" stroke="#14145c" stroke-width=".9"/><rect x="8" y="7.800" width="8.300" height="2.300" fill="#1c1c9c"/><rect x="9.800" y="11.500" width="1.700" height="5.500" fill="#cc2222"/><rect x="12.600" y="11" width="1.700" height="6" fill="#a3197a"/></svg>
<div class="t" style="left:219.7px;top:720.200px;font-size:7.650px;font-weight:700">1CV8 Servers</div>
<!-- task button 2 -->
<div class="a" style="left:300.7px;top:712.2px;width:105.800px;height:24.400px;background:#d7d4cd;box-shadow:inset 0.7px 0.7px 0 #fff,inset -0.7px -0.7px 0 #404040,inset -1.4px -1.4px 0 #808080"></div>
<svg class="a" style="left:303px;top:714.500px" width="21" height="20" viewBox="0 0 21 20"><path d="M9.500 4.500C14 4.500 17.500 7.500 17.500 11.500C17.500 15.500 14.500 17.500 12.500 17C11 16.600 11.500 14.500 10 14.500C8 14.500 8.500 17.800 6 17.500C3 17 1 14.500 1 11.500C1 7.500 5 4.500 9.500 4.500Z" fill="#dcecf8" stroke="#7c98b4" stroke-width=".7"/><circle cx="5" cy="11" r="1.500" fill="#d84a3c"/><circle cx="8" cy="8" r="1.500" fill="#4cb43c"/><circle cx="12" cy="7.500" r="1.500" fill="#f0c020"/><ellipse cx="11" cy="11.500" rx="1.600" ry="2" fill="#5c9cd8"/><path d="M19.500 1L20.500 2L15 13.500L13.300 12.700Z" fill="#e8a030" stroke="#a86c10" stroke-width=".4"/><path d="M13.300 12.700L15 13.500L13.500 16.500L12.300 15.800Z" fill="#4c8cd0"/></svg>
<div class="t" style="left:326.600px;top:720.200px;font-size:7.300px">Безымянный - Paint</div>
<!-- tray -->
<div class="a" style="left:1174.6px;top:713px;width:0.8px;height:23px;background:#808080;box-shadow:0.8px 0 0 #fff"></div>
<div class="t" style="left:1181.200px;top:718.800px;font-size:7.600px">EN</div>
<div class="a" style="left:1194.4px;top:714px;width:0.8px;height:21px;background:#fff;box-shadow:0.8px 0 0 #808080"></div>
<div class="a" style="left:1197px;top:712.4px;width:120.800px;height:24.600px;box-shadow:inset 0.7px 0.7px 0 #808080,inset -0.7px -0.7px 0 #fff"></div>
<svg class="a" style="left:1200.5px;top:719.500px" width="6" height="7" viewBox="0 0 6 7"><path d="M0.700 3l2.300-2.200 2.300 2.200M0.700 6.300l2.300-2.200 2.300 2.200" stroke="#000" stroke-width="1.100" fill="none"/></svg>
<!-- speaker with red x -->
<svg class="a" style="left:1211px;top:718px" width="13" height="13" viewBox="0 0 13 13"><path d="M2 4.500h2l3-3v9.500l-3-3h-2z" fill="#f5f5f5" stroke="#77797c" stroke-width=".7"/><path d="M8.500 3c1.500 1.500 1.500 5 0 6.500" stroke="#8a8c8f" stroke-width=".7" fill="none"/><circle cx="9" cy="9" r="3" fill="#d8261c"/><path d="M7.700 7.700l2.600 2.600M10.300 7.700l-2.600 2.600" stroke="#fff" stroke-width=".9"/></svg>
<!-- flag -->
<svg class="a" style="left:1227px;top:718px" width="13" height="12" viewBox="0 0 13 12"><path d="M2.500 1v10.500" stroke="#6f7275" stroke-width="1.100"/><path d="M3.200 1.800c2-.9 3.500.8 5.500 0l2.800 0-1.500 2.200 1 2.200c-2 .7-4.500-.8-7.800.1z" fill="#f2f2f2" stroke="#85888b" stroke-width=".6"/></svg>
<!-- network -->
<svg class="a" style="left:1243px;top:717.500px" width="14" height="14" viewBox="0 0 14 14"><rect x="4" y="3" width="8.500" height="7" fill="#e9edf0" stroke="#707376" stroke-width=".7"/><rect x="1" y="1" width="4" height="7.500" fill="#d5d9dc" stroke="#55585b" stroke-width=".7"/><path d="M3 8.500v3.500M1.500 12h4M7 10v2M5.500 12.500h5" stroke="#55585b" stroke-width=".8"/></svg>
<div class="t" style="left:1262px;width:40px;text-align:center;top:715px;font-size:7.4px">16:18</div>
<div class="t" style="left:1262px;width:40px;text-align:center;top:725.500px;font-size:7.4px">13.08.2017</div>
<svg class="a" style="left:1306px;top:721px" width="10" height="8" viewBox="0 0 10 8"><rect x="0" y="0" width="10" height="8" fill="#2d65c2"/><rect x="0" y="0" width="10" height="3.500" fill="#4f8be0"/><rect x="0" y="6.300" width="10" height="1.700" fill="#c9d6ea"/></svg>
</div></div>
<!-- ===== Local Windows 7 taskbar ===== -->
<div class="a" style="left:0;top:738px;width:1366px;height:30px;background:linear-gradient(90deg,#0b0e11 0px,#0d1116 60px,#111a22 120px,#0c1014 200px,#090b0d 300px,#0b1620 440px,#0a0f14 520px,#0d1217 600px,#15191c 660px,#15191c 680px,#8494a0 687px,#a0b0b8 700px,#90a2ac 722px,#788e9a 763px,#5e7684 800px,#486472 836px,#1c2a32 850px,#0b1218 860px,#0c141a 945px,#34424a 968px,#5c6a72 995px,#46545c 1022px,#1c262c 1045px,#0e1418 1120px,#141b20 1200px,#1f282e 1260px,#2c363c 1340px,#3a444a 1366px)"></div>
<div class="a" style="left:0;top:738px;width:1366px;height:30px;background:linear-gradient(180deg,rgba(0,0,0,.5) 0,rgba(0,0,0,.22) 4px,rgba(0,0,0,0) 14px,rgba(0,0,0,.08) 30px)"></div>
<div class="a" style="left:0;top:738.700px;width:1366px;height:1.200px;background:#5a5e62"></div>
<!-- start orb -->
<div class="a" style="left:8.400px;top:733.800px;width:37.400px;height:37.400px;border-radius:50%;background:radial-gradient(ellipse 60% 32% at 50% 100%,#22d4fa 0,rgba(20,160,230,.7) 55%,rgba(12,76,148,0) 100%),linear-gradient(180deg,#c4d4de 0%,#9cb8cc 22%,#5c8cb4 40%,#1c5c9c 52%,#0c4890 72%,#0c64b0 100%);box-shadow:0 0 2.500px 1px rgba(140,190,230,.55),inset 0 0 1.500px 1px rgba(220,238,250,.75)"></div>
<svg class="a" style="left:14.500px;top:737.500px" width="27" height="27" viewBox="0 0 26 24" preserveAspectRatio="none"><defs><linearGradient id="fR" x1="0" y1="0" x2="0" y2="1"><stop offset="0" stop-color="#e8482c"/><stop offset="1" stop-color="#f89c3c"/></linearGradient><linearGradient id="fG" x1="0" y1="0" x2="0" y2="1"><stop offset="0" stop-color="#6ca83c"/><stop offset="1" stop-color="#b8dc64"/></linearGradient><linearGradient id="fB" x1="0" y1="0" x2="0" y2="1"><stop offset="0" stop-color="#5cb0ec"/><stop offset="1" stop-color="#2c78d0"/></linearGradient><linearGradient id="fY" x1="0" y1="0" x2="0" y2="1"><stop offset="0" stop-color="#fcd84c"/><stop offset="1" stop-color="#f4a820"/></linearGradient></defs><path d="M3.500 4.500c2.500-2 5.500-2 8-.3l-1.700 7.300c-2.500-1.500-5.300-1.500-8 .4z" fill="url(#fR)"/><path d="M12.700 4.800c2.500 1.600 5.300 1.800 8.800-.3l-1.800 7.300c-3 2-6 1.800-8.700.3z" fill="url(#fG)"/><path d="M1.500 13.300c2.500-1.900 5.300-1.900 7.900-.4l-1.700 7.300c-2.500-1.500-5.300-1.500-7.900.4z" fill="url(#fB)"/><path d="M10.600 13.500c2.600 1.500 5.500 1.700 8.700-.3l-1.700 7.200c-3 2-6 1.800-8.700.3z" fill="url(#fY)"/></svg>
<!-- explorer -->
<svg class="a" style="left:72px;top:744px" width="18" height="18" viewBox="0 0 22 20"><path d="M1 3.500h7l1.500 1.500h11v11h-19.500z" fill="#e9c45c"/><rect x="2" y="5" width="18.500" height="3" fill="#fbf3d0"/><path d="M1 7.500h20.500v9h-20.500z" fill="#f3d678"/><path d="M4 19v-6.500c0-1.500 1-2.500 2.500-2.500h9c1.500 0 2.500 1 2.500 2.500v6.500h-3v-4h-8v4z" fill="#8fc0e8" stroke="#5d95c8" stroke-width=".6"/></svg>
<!-- WMP -->
<svg class="a" style="left:119px;top:745px" width="16" height="16" viewBox="0 0 16 16"><rect x=".5" y=".5" width="15" height="15" fill="#cfe4f6" stroke="#7fb2e0" stroke-width="1"/><rect x="2" y="2" width="12" height="12" fill="#eef6fc"/><circle cx="8" cy="8" r="5.600" fill="#f08a1c"/><path d="M6.300 4.800l5 3.200-5 3.200z" fill="#fff"/></svg>
<!-- chrome button -->
<div class="a" style="left:152.300px;top:740px;width:41.300px;height:27.500px;border-radius:2px;border:1px solid rgba(170,180,190,.55);background:linear-gradient(135deg,rgba(120,130,140,.55),rgba(40,45,50,.5) 55%,rgba(25,28,32,.6))"></div>
<svg class="a" style="left:165.500px;top:745.500px" width="15" height="15" viewBox="0 0 16 16"><circle cx="8" cy="8" r="7.500" fill="#fff"/><path d="M8 .5a7.500 7.500 0 0 1 6.500 3.750h-6.500a3.750 3.750 0 0 0-3.250 1.880l-3.250-1.880a7.500 7.500 0 0 1 6.500-3.750z" fill="#e53a2f"/><path d="M1.500 4.250l3.250 5.630a3.750 3.750 0 0 0 3.250 1.870l-3.250 3.300a7.500 7.500 0 0 1-3.250-10.800z" fill="#2ca24a"/><path d="M14.500 4.250a7.500 7.500 0 0 1-6.500 11.250l3.250-5.620a3.750 3.750 0 0 0 0-3.760z" fill="#f9c21c"/><circle cx="8" cy="8" r="3.400" fill="#fff"/><circle cx="8" cy="8" r="2.700" fill="#3f7fe8"/></svg>
<!-- TV button (active) -->
<div class="a" style="left:198px;top:740px;width:34.400px;height:27.500px;border-radius:2px;border:1px solid rgba(220,225,230,.7);background:linear-gradient(135deg,rgba(205,210,215,.9),rgba(140,146,152,.85) 50%,rgba(105,110,116,.85))"></div>
<svg class="a" style="left:207px;top:744.500px" width="16" height="17" viewBox="0 0 16 17"><rect x="1" y=".5" width="12.500" height="15" rx="2" fill="#1c86e0"/><path d="M13 1.500l2 1v14l-2-1.500z" fill="#0d5fb5"/><circle cx="7.300" cy="8" r="5" fill="#fff"/><path d="M3.300 8l2.700-2.100v1.300h2.600v-1.300l2.700 2.100-2.700 2.100v-1.300h-2.600v1.300z" fill="#1c86e0"/></svg>
<div class="a" style="left:234.500px;top:740px;width:1px;height:28px;background:rgba(150,158,166,.7)"></div>
<div class="a" style="left:237px;top:740px;width:1.500px;height:28px;background:rgba(150,158,166,.55)"></div>
<!-- tray -->
<div class="t" style="left:1128.500px;top:745.400px;font-size:10.900px;line-height:13px;color:#fff">EN</div>
<svg class="a" style="left:1159px;top:752px" width="9" height="6" viewBox="0 0 9 6"><path d="M0.500 5.500l4-4.500 4 4.500z" fill="#fff"/></svg>
<!-- action center flag + red x -->
<svg class="a" style="left:1180px;top:746px" width="17" height="17" viewBox="0 0 17 17"><path d="M1.800 1v14.500" stroke="#fff" stroke-width="1.500"/><path d="M2.800 1.800c2.500-1 4 .9 6.500 0l3.500.2-1.600 2.400 1.200 2.600c-2.500.8-5.500-.9-9.600.1z" fill="#fff"/><circle cx="11" cy="11.300" r="4.300" fill="#d8261c" stroke="#f4b0aa" stroke-width=".6"/><path d="M9.200 9.500l3.600 3.600M12.800 9.500l-3.600 3.600" stroke="#fff" stroke-width="1.400"/></svg>
<!-- power plug with red battery -->
<svg class="a" style="left:1204px;top:746px" width="15" height="17" viewBox="0 0 15 17"><rect x="1.500" y="3" width="7.500" height="12.500" rx="1" fill="none" stroke="#f0f0f0" stroke-width="1.100"/><rect x="3.700" y="1.500" width="3" height="1.700" fill="#f0f0f0"/><rect x="2.300" y="8" width="6" height="7" fill="#d8261c"/><path d="M3 9l4.500 5M7.500 9l-4.500 5" stroke="#7a0f0a" stroke-width="1.100"/><path d="M8.500 4.500h4.500v4c0 1.500-1.200 2.500-2.300 2.500s-2.200-1-2.200-2.500z" fill="#fff"/><path d="M9.800 2v3M11.800 2v3" stroke="#fff" stroke-width="1.100"/><path d="M10.700 11v3.500" stroke="#fff" stroke-width="1.100"/></svg>
<!-- network -->
<svg class="a" style="left:1228px;top:746px" width="17" height="17" viewBox="0 0 17 17"><rect x="5" y="3.500" width="10" height="8" fill="none" stroke="#fff" stroke-width="1.300"/><rect x="1.500" y="1.500" width="4" height="8" fill="#fff"/><path d="M2.700 3.500h1.600" stroke="#222" stroke-width=".7"/><path d="M3.500 9.500v4h3" stroke="#fff" stroke-width="1.200" fill="none"/><path d="M10 11.500v3M7 15h6.500" stroke="#fff" stroke-width="1.300"/></svg>
<!-- speaker -->
<svg class="a" style="left:1255px;top:746px" width="10" height="17" viewBox="0 0 10 17"><path d="M1 6h2.500l4.500-4.500v13.500l-4.500-4.500h-2.500z" fill="#fff"/></svg>
<div class="t" style="left:1299px;top:747.200px;font-size:12.300px;line-height:15px;color:#f4f4f4;letter-spacing:-0.800px">16:17</div>
<!-- show desktop -->
<div class="a" style="left:1352.500px;top:739px;width:14px;height:29px;border-left:1px solid rgba(200,208,214,.8);background:linear-gradient(180deg,rgba(165,173,180,.85),rgba(120,128,135,.8))"></div>
</body></html>
